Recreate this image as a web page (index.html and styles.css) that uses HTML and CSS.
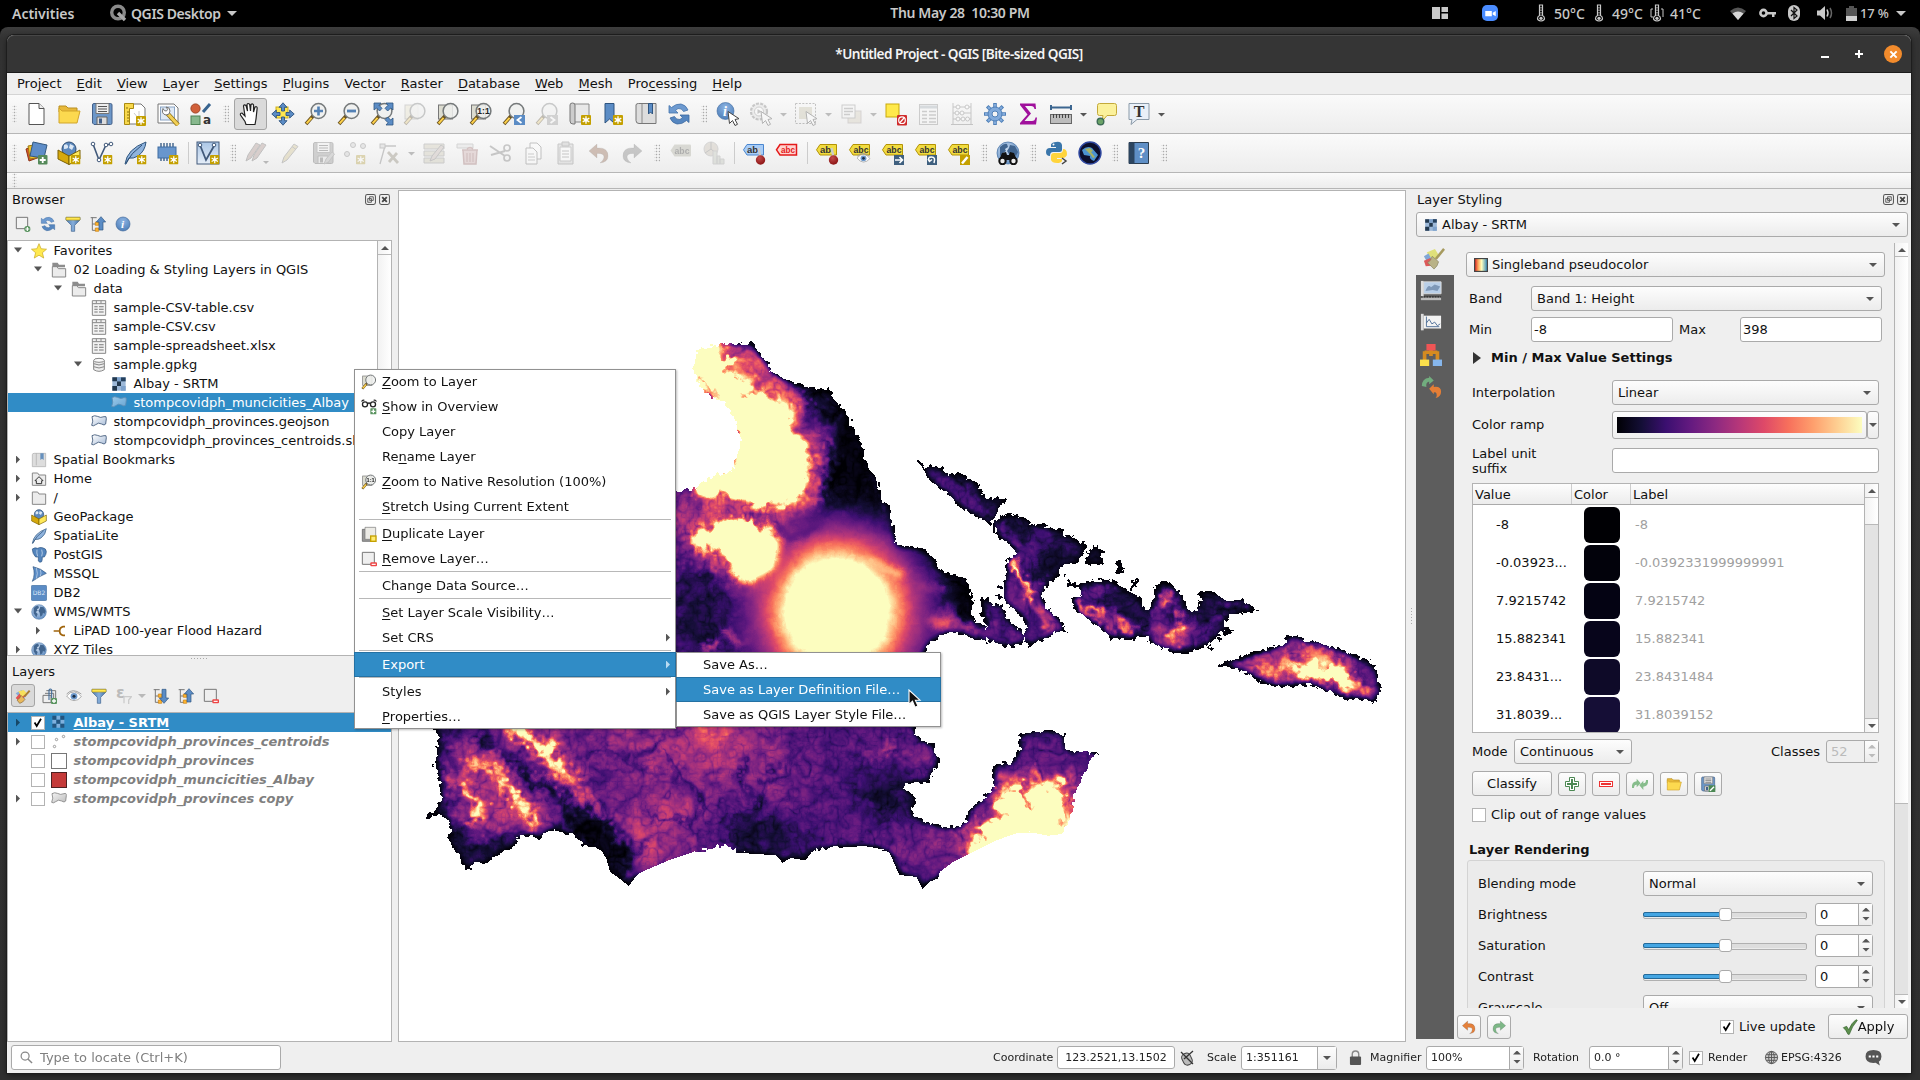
FILE: index.html
```html
<!DOCTYPE html>
<html lang="en">
<head>
<meta charset="utf-8">
<title>*Untitled Project - QGIS [Bite-sized QGIS]</title>
<link rel="stylesheet" href="styles.css">
</head>
<body>
<svg class="defs" width="0" height="0">
<defs>
<linearGradient id="gFilter" x1="0" y1="0" x2="1" y2="0"><stop offset="0" stop-color="#4a78ad"/><stop offset=".5" stop-color="#86aedb"/><stop offset="1" stop-color="#3e6b9f"/></linearGradient>
<linearGradient id="gPoly" x1="0" y1="0" x2="1" y2="1"><stop offset="0" stop-color="#fff"/><stop offset="1" stop-color="#a9bdd8"/></linearGradient>
<linearGradient id="gPolyG" x1="0" y1="0" x2="1" y2="1"><stop offset="0" stop-color="#f4f4f4"/><stop offset="1" stop-color="#bdbdbd"/></linearGradient>
<linearGradient id="gPolyB" x1="0" y1="0" x2="1" y2="1"><stop offset="0" stop-color="#9ccbea"/><stop offset="1" stop-color="#6aa5d3"/></linearGradient>
<linearGradient id="gSpec" x1="0" y1="0" x2="1" y2="0"><stop offset="0" stop-color="#d7191c"/><stop offset=".3" stop-color="#fdae61"/><stop offset=".55" stop-color="#ffffbf"/><stop offset="1" stop-color="#2b83ba"/></linearGradient>
<linearGradient id="gVec" x1="0" y1="0" x2="0" y2="1"><stop offset="0" stop-color="#aac6e6"/><stop offset="1" stop-color="#e6eef8"/></linearGradient>
<radialGradient id="gGlobe" cx=".4" cy=".35" r=".7"><stop offset="0" stop-color="#cfdff2"/><stop offset="1" stop-color="#5d8ac0"/></radialGradient>
<radialGradient id="gInfo" cx=".5" cy=".3" r=".8"><stop offset="0" stop-color="#8db4e3"/><stop offset="1" stop-color="#4678b3"/></radialGradient>
<radialGradient id="gRed" cx=".4" cy=".3" r=".7"><stop offset="0" stop-color="#c34b4b"/><stop offset="1" stop-color="#8c1414"/></radialGradient>
</defs>
<symbol id="star" viewBox="0 0 10 10"><rect width="10" height="10" rx="1" fill="#c4a000"/><path d="M5 1.2v7.6M1.7 3.1l6.6 3.8M8.3 3.1L1.7 6.9" stroke="#fff" stroke-width="1.3"/><circle cx="5" cy="5" r="1.6" fill="#fff"/></symbol>
<symbol id="glass" viewBox="0 0 24 24"><path d="M2 22l7-8" stroke="#6b5320" stroke-width="3.6"/><path d="M2.6 21.4l5-5.6" stroke="#ffd24a" stroke-width="2"/><circle cx="14.500" cy="9" r="7.400" fill="#eef0ef" fill-opacity=".85" stroke="#75797a" stroke-width="1.500"/></symbol>
<symbol id="new" viewBox="0 0 24 24"><path d="M5 1.500h10l5 5v16H5z" fill="#fff" stroke="#555"/><path d="M15 1.500v5h5" fill="#eee" stroke="#555"/></symbol>
<symbol id="open" viewBox="0 0 24 24"><path d="M2 4h7l2 2h9v4H2z" fill="#e8b93a" stroke="#b98f20"/><path d="M2 21V6l3 3h18l-3 12z" fill="#fcd94f" stroke="#d1a52b"/></symbol>
<symbol id="save" viewBox="0 0 24 24"><path d="M2.500 3q0-1.500 1.500-1.500h16.500q1.500 0 1.500 1.500v18q0 1.500-1.500 1.500H4L2.500 21z" fill="#6c97c9" stroke="#44618a"/><path d="M6 1.500h13v10H6z" fill="#eee" stroke="#777"/><path d="M8 4.500h9M8 7h9M8 9.500h9" stroke="#555"/><path d="M7 15h10v7.500H7z" fill="#ddd" stroke="#666"/><path d="M9 16.500h3v5H9z" fill="#44618a"/></symbol>
<symbol id="layout" viewBox="0 0 24 24"><path d="M4 2h14l4 4v16H4z" fill="#fff" stroke="#777"/><path d="M1.500 1.500h9v5h-4v16h-5z" fill="#f8d84c" stroke="#a98a10"/><path d="M4 5v2M4 10h2M4 13h2M4 16h2M4 19h2" stroke="#88700d"/><path d="M11 11l5 6M16 9v6" stroke="#ccc"/><use href="#star" x="13" y="14" width="10" height="10"/></symbol>
<symbol id="layoutmgr" viewBox="0 0 24 24"><path d="M2 2h16l4 4v15H2z" fill="#fff" stroke="#777"/><rect x="4.500" y="5" width="14" height="13" fill="#dfe9f5" stroke="#8aa4c4"/><path d="M11 11l11 12" stroke="#8c6d12" stroke-width="4.500"/><path d="M12 12l10 11" stroke="#f1cf55" stroke-width="3"/><path d="M7 6.500q1 3 3.500 2.500Q13 7.500 10 5q4 0 4 4t-4 4q-5-1-3-6.500z" fill="#fff" stroke="#777"/></symbol>
<symbol id="stylemgr" viewBox="0 0 24 24"><circle cx="6.500" cy="6.500" r="4.600" fill="#d1603a" stroke="#9f4424"/><path d="M14 10l7-8" stroke="#39648f" stroke-width="3"/><rect x="2" y="14" width="9" height="8.500" fill="#87b88d" stroke="#4d8055"/><text x="14" y="22" font-size="12" fill="#333" font-family="DejaVu Sans">a</text></symbol>
<symbol id="hand" viewBox="0 0 24 24"><path d="M8 22.500l-1-3-4.500-6.500q-.5-2 1.500-2l3 3L5.500 4q.5-2 2.500-.5L9.500 9 9 2.500q1-2 2.700 0L12.500 9l.5-6.500q1.500-1.500 2.500.3V10l1.500-5q1.700-1 2.200.8L18 17l-1 5.500z" fill="#fff" stroke="#222" stroke-width="1.200"/></symbol>
<symbol id="panto" viewBox="0 0 24 24"><rect x="5" y="5" width="12" height="11" fill="#ffe74f" stroke="#cdaf1d"/><g fill="#5b8cc5" stroke="#2f5580" stroke-width=".9"><path d="M12 .8l4 4.500h-2.500V9h-3V5.300H8z"/><path d="M12 23.200l4-4.500h-2.500V15h-3v3.700H8z"/><path d="M.8 12l4.500-4v2.500H9v3H5.300V16z"/><path d="M23.200 12l-4.500-4v2.500H15v3h3.700V16z"/></g></symbol>
<symbol id="zoomin" viewBox="0 0 24 24"><use href="#glass"/><path d="M14.500 4.500v9M10 9h9" stroke="#5381b5" stroke-width="2.600"/></symbol>
<symbol id="zoomout" viewBox="0 0 24 24"><use href="#glass"/><path d="M10 9h9" stroke="#5381b5" stroke-width="2.800"/></symbol>
<symbol id="zoomfull" viewBox="0 0 24 24"><use href="#glass"/><g fill="#5b8cc5" stroke="#2f5580" stroke-width=".8"><path d="M4 1h7L9 3.300l3 3L9.600 9l-3-3L4 8z"/><path d="M23 1v7l-2.300-2-3 3-2.700-2.700 3-3L16 1z"/><path d="M23 23v-7l-2.300 2-3-3-2.700 2.700 3 3L16 23z"/></g></symbol>
<symbol id="zoomsel" viewBox="0 0 24 24"><rect x="2" y="3" width="13" height="14" fill="#eae3b8" stroke="#999"/><use href="#glass"/></symbol>
<symbol id="zoomlay" viewBox="0 0 24 24"><rect x="2.500" y="3" width="14" height="14" fill="#dcdcd0" stroke="#777"/><use href="#glass"/></symbol>
<symbol id="zoomone" viewBox="0 0 24 24"><rect x="2.500" y="3" width="14" height="14" fill="#dcdcd0" stroke="#777"/><use href="#glass"/><text x="14.500" y="12" font-size="8.500" font-weight="bold" text-anchor="middle" fill="#222" font-family="Liberation Sans">1:1</text></symbol>
<symbol id="zoomlast" viewBox="0 0 24 24"><use href="#glass"/><rect x="12" y="13" width="11" height="10" fill="#5b8cc5"/><path d="M19.500 15l-4 3 4 3" fill="none" stroke="#fff" stroke-width="1.800"/></symbol>
<symbol id="zoomnext" viewBox="0 0 24 24"><use href="#glass"/><rect x="12" y="13" width="11" height="10" fill="#999"/><path d="M15.500 15l4 3-4 3" fill="none" stroke="#fff" stroke-width="1.800"/></symbol>
<symbol id="mapnew" viewBox="0 0 24 24"><path d="M6 2h15v18H6z" fill="#e8e8e8" stroke="#888"/><path d="M2 3q0-2 2.500-2T7 3v19H5q-3 0-3-3z" fill="#ccc" stroke="#777"/><use href="#star" x="13" y="13" width="10" height="10"/></symbol>
<symbol id="bmnew" viewBox="0 0 24 24"><path d="M4 1.500h9V21l-4.500-4L4 21z" fill="#5b8cc5" stroke="#2f5580"/><use href="#star" x="12" y="13" width="10" height="10"/></symbol>
<symbol id="bmshow" viewBox="0 0 24 24"><path d="M2 3q0-1.500 2.500-1.500H22v20H5q-3 0-3-3z" fill="#ddd" stroke="#777"/><path d="M8 2v19" stroke="#888"/><path d="M14.500 1.500h4V12l-2-2-2 2z" fill="#5b8cc5" stroke="#2f5580"/></symbol>
<symbol id="refresh" viewBox="0 0 24 24"><path d="M2 11V3.500l2.500 2Q9 1.500 14 2q5 1 7 6l-4.500 1.500Q15 6 11 6.500L8.500 8.500 11 11z" fill="#6d9ad0" stroke="#4574ab" stroke-width=".8"/><path d="M22 13v7.500l-2.500-2Q15 22.500 10 22q-5-1-7-6l4.500-1.500Q9 18 13 17.500l2.500-2L13 13z" fill="#5586c0" stroke="#3d6a9f" stroke-width=".8"/></symbol>
<symbol id="cursorw" viewBox="0 0 24 24"><path d="M12 9.500l1.500 12 3-3 2.500 5 2.500-1.200-2.500-4.800 4-.8z" fill="#fff" stroke="#444"/></symbol>
<symbol id="identify" viewBox="0 0 24 24"><circle cx="9.500" cy="9" r="8.500" fill="url(#gInfo)" stroke="#3f6ca1" stroke-width=".6"/><text x="7" y="14" font-size="14" font-style="italic" font-weight="bold" fill="#fff" font-family="Liberation Serif">i</text><use href="#cursorw"/></symbol>
<symbol id="action" viewBox="0 0 24 24"><circle cx="10" cy="9.500" r="8" fill="#ddd" stroke="#777" stroke-width="2.200" stroke-dasharray="3 1.300"/><circle cx="10" cy="9.500" r="4.500" fill="#fff" stroke="#888"/><path d="M8.500 7v5l4-2.500z" fill="#777"/><use href="#cursorw"/></symbol>
<symbol id="select" viewBox="0 0 24 24"><rect x="1.500" y="1.500" width="20" height="20" fill="none" stroke="#666" stroke-dasharray="2 1.400"/><rect x="5" y="5" width="13" height="12" fill="#c8bf98"/><use href="#cursorw"/></symbol>
<symbol id="formsel" viewBox="0 0 24 24"><rect x="9" y="9" width="13" height="12" fill="#d8ceb0" stroke="#a99"/><rect x="3" y="3" width="13" height="13" fill="#f4f4f4" stroke="#888"/><path d="M5 6.500h9M5 9.500h9M5 12.500h6" stroke="#888" stroke-width="1.300"/></symbol>
<symbol id="desel" viewBox="0 0 24 24"><rect x="2" y="2" width="13" height="13" fill="#ffe94b" stroke="#c9a90c"/><rect x="13" y="13" width="10" height="10.500" rx="1" fill="#d02b2b"/><circle cx="18" cy="18.200" r="3.300" fill="none" stroke="#fff" stroke-width="1.200"/><path d="M16 20.500l4-4.500" stroke="#fff" stroke-width="1.200"/></symbol>
<symbol id="table" viewBox="0 0 24 24"><rect x="2.500" y="2.500" width="18" height="20" fill="#f8f8f8" stroke="#888"/><path d="M3 5h17" stroke="#9ab" stroke-width="3"/><path d="M5 9.500h5M5 13h5M5 16.500h5M5 20h5M12 9.500h7M12 13h7M12 16.500h7M12 20h7" stroke="#888" stroke-width="1.300"/></symbol>
<symbol id="abacus" viewBox="0 0 24 24"><path d="M3 1v22M21 1v22M1 22.500h22M3 5h18M3 11h18M3 17h18" stroke="#777" fill="none"/><g fill="#fff" stroke="#777"><circle cx="8" cy="5" r="2"/><circle cx="17" cy="5" r="2"/><circle cx="7" cy="11" r="2"/><circle cx="12" cy="11" r="2"/><circle cx="8" cy="17" r="2"/><circle cx="13" cy="17" r="2"/><circle cx="17.500" cy="17" r="2"/></g></symbol>
<symbol id="gear" viewBox="0 0 24 24"><path d="M12 1v22M1 12h22M4.200 4.200l15.600 15.600M19.800 4.200L4.200 19.800" stroke="#5080b8" stroke-width="3.600"/><path d="M12 2v20M2 12h20M5 5l14 14M19 5L5 19" stroke="#81aadb" stroke-width="2"/><circle cx="12" cy="12" r="7" fill="#81aadb" stroke="#5080b8"/><circle cx="12" cy="12" r="3" fill="#f4f4f4" stroke="#5080b8"/></symbol>
<symbol id="sigma" viewBox="0 0 24 24"><path d="M4 1.500h15.500l.5 5.500h-1.500q-.5-3-3.500-3H9l6 7.500L8.500 19H16q3 0 3.500-3.500H21L20 22.500H4v-1.500l7.500-8.500L4 3z" fill="#a0109c"/></symbol>
<symbol id="ruler" viewBox="0 0 24 24"><path d="M2 3v5M22 3v5M2 5.500h20" stroke="#3c6690" stroke-width="2"/><rect x="1.500" y="12.500" width="21" height="9" fill="#bcbcbc" stroke="#666"/><path d="M4.500 12v4M7.500 12v4M10.500 12v4M13.500 12v4M16.500 12v4M19.500 12v4" stroke="#444"/></symbol>
<symbol id="tip" viewBox="0 0 24 24"><path d="M5.500 1.500h15q2 0 2 2v8q0 2-2 2H13l-5 6 1-6H5.500q-2 0-2-2v-8q0-2 2-2z" fill="#fbf19b" stroke="#c3a93a"/><circle cx="6.500" cy="19.500" r="3.300" fill="#6ba368" stroke="#3d6b55" stroke-width="1.400"/></symbol>
<symbol id="textann" viewBox="0 0 24 24"><path d="M2 1.500h20v16H10l-6 5 1-5H2z" fill="#e9f0f8" stroke="#8b9aa8"/><text x="12" y="15" text-anchor="middle" font-size="16" fill="#333" font-family="Liberation Serif">T</text></symbol>
<symbol id="datasrc" viewBox="0 0 24 24"><path d="M2 8l11-4 3 12-11 4z" fill="#d9542c" stroke="#8c3416"/><path d="M4 5l11-2 2 13-11 2z" fill="#f2c12c" stroke="#9c7a12"/><path d="M9 1l14 3-3 13-14-2z" fill="#5e8dc8" stroke="#34597f"/><rect x="14" y="14" width="9.500" height="9.500" rx="1" fill="#558a5a"/><path d="M18.700 16v6M15.700 19h6" stroke="#fff" stroke-width="1.800"/></symbol>
<symbol id="gpkg" viewBox="0 0 24 24"><circle cx="12" cy="8" r="7" fill="#5d89bd" stroke="#2e4d73"/><path d="M7 4q3-2 4 1T7 8zM13 3l4 2-2 4-3-2z" fill="#dce8f5"/><path d="M1 9l11 6v8.500L1 18z" fill="#d6a90c" stroke="#7a6005"/><path d="M23 9l-11 6v8.500L23 18z" fill="#ffe95a" stroke="#7a6005"/></symbol>
<symbol id="gpkgn" viewBox="0 0 24 24"><use href="#gpkg"/><use href="#star" x="14" y="14" width="9.500" height="9.500"/></symbol>
<symbol id="vnew" viewBox="0 0 24 24"><path d="M3 3l6 16L16 4l5-1" fill="none" stroke="#41597a" stroke-width="1.600"/><g fill="#fff" stroke="#41597a"><circle cx="3" cy="3" r="1.800"/><circle cx="9" cy="19" r="1.800"/><circle cx="16" cy="4" r="1.800"/><circle cx="21" cy="3" r="1.800"/></g><use href="#star" x="13" y="14" width="9.500" height="9.500"/></symbol>
<symbol id="feather" viewBox="0 0 24 24"><path d="M2 23Q4 8 23 1q-1 9-8 14-5 3-9 2l-3 6z" fill="#8fb3dd" stroke="#31577f"/><path d="M3 22Q8 12 19 4" fill="none" stroke="#2c4e75"/></symbol>
<symbol id="feathern" viewBox="0 0 24 24"><use href="#feather"/><use href="#star" x="14" y="14" width="9.500" height="9.500"/></symbol>
<symbol id="chip" viewBox="0 0 24 24"><path d="M5 2v18M8 2v18M11 2v18M14 2v18M17 2v18" stroke="#2f5580" stroke-width="1.300"/><rect x="2" y="6" width="18" height="11" fill="#6896cd" stroke="#3f6ca1"/><use href="#star" x="13" y="14" width="9.500" height="9.500"/></symbol>
<symbol id="virt" viewBox="0 0 24 24"><rect x="1" y="1" width="22" height="22" fill="url(#gVec)" stroke="#41597a"/><path d="M4 4l6 15L18 5" fill="none" stroke="#41597a" stroke-width="1.800"/><circle cx="4" cy="4" r="1.800" fill="#fff" stroke="#41597a"/><circle cx="18" cy="4" r="1.800" fill="#fff" stroke="#41597a"/><use href="#star" x="14" y="14" width="9.500" height="9.500"/></symbol>
<symbol id="pencil" viewBox="0 0 24 24"><path d="M4 22l2-6L16 3l4 2.500L9 19z" fill="#d9c06a" stroke="#777"/><path d="M14 5.500l4 3" stroke="#777"/></symbol>
<symbol id="pencils" viewBox="0 0 24 24"><path d="M1 20l2-6L11 2l4 2-9 13zM7 20l2-6 8-12 4 2-9 13z" fill="#b58a80" stroke="#666"/><path d="M18 20h6l-3 3z" fill="#555"/></symbol>
<symbol id="saveed" viewBox="0 0 24 24"><g filter="grayscale(1)"><use href="#save"/></g><path d="M13 23l2-5 6-7 2.500 2-6 8z" fill="#d9a090" stroke="#777"/></symbol>
<symbol id="points" viewBox="0 0 24 24"><g fill="#ccc" stroke="#777"><circle cx="9" cy="4" r="2.500"/><circle cx="19" cy="5" r="2.500"/><circle cx="3" cy="13" r="2.500"/></g><use href="#star" x="12" y="14" width="9.500" height="9.500"/></symbol>
<symbol id="vertex" viewBox="0 0 24 24"><path d="M3 23L8 5h11" stroke="#777" fill="none" stroke-width="1.300"/><rect x="3" y="3" width="5" height="4" fill="#ccc" stroke="#777"/><path d="M12 21l8-9M11 11l10 11" stroke="#8c8264" stroke-width="2.800"/></symbol>
<symbol id="multied" viewBox="0 0 24 24"><path d="M2 3h20v5H2zM2 10h20v5H2zM2 17h20v5H2z" fill="#cdc6a4" stroke="#888"/><path d="M8 20l2-5 9-11 3 2-9 12z" fill="#c9b0a8" stroke="#777"/></symbol>
<symbol id="trash" viewBox="0 0 24 24"><path d="M2 3h16v4H2z" fill="#ddd" stroke="#999"/><path d="M7 9h16M8 9l1 14h12l1-14M12 8q3-3 6 0" fill="#dfa6a6" stroke="#b36565" stroke-width="1.500"/><path d="M12 12v9M15 12v9M18 12v9" stroke="#a55"/></symbol>
<symbol id="cut" viewBox="0 0 24 24"><path d="M2 5l15 10M3 14l14-4" stroke="#777" stroke-width="2"/><circle cx="19" cy="7" r="3" fill="none" stroke="#777" stroke-width="1.700"/><circle cx="19" cy="17" r="3" fill="none" stroke="#777" stroke-width="1.700"/></symbol>
<symbol id="copy" viewBox="0 0 24 24"><path d="M9 2h7l4 4v12H9z" fill="#fff" stroke="#666"/><path d="M5 7h7l4 4v12H5z" fill="#fff" stroke="#666"/><path d="M7 13h6M7 16h7M7 19h7" stroke="#888"/></symbol>
<symbol id="paste" viewBox="0 0 24 24"><path d="M4 3h15v20H4z" fill="#ccc" stroke="#777"/><path d="M6 6h11v14H6z" fill="#fff" stroke="#888"/><path d="M8 1h7v4H8zM8 10h7M8 13h7M8 16h7" fill="#bbb" stroke="#777"/></symbol>
<symbol id="undo" viewBox="0 0 24 24"><path d="M2 10l8-7v4q11-1 11 8 0 6-8 7 4-3 4-6 0-4-7-3.500V17z" fill="currentColor" stroke="#0003"/></symbol>
<symbol id="redo" viewBox="0 0 24 24"><path d="M22 10l-8-7v4Q3 6 3 15q0 6 8 7-4-3-4-6 0-4 7-3.500V17z" fill="currentColor" stroke="#0003"/></symbol>
<symbol id="tag" viewBox="0 0 24 24"><path d="M5.500 3.500H21q1 0 1 1v10q0 1-1 1H5.500L1.500 9.500z" fill="currentColor"/><text x="13" y="13" font-size="9.500" font-weight="bold" text-anchor="middle" font-family="Liberation Sans" textLength="15" lengthAdjust="spacingAndGlyphs" fill="#333">abc</text></symbol>
<symbol id="tagy" viewBox="0 0 24 24"><path d="M5 3.500h16.500v10.500H5L1.500 8.800z" fill="#f1dc40" stroke="#b39205"/><text x="13" y="12" font-size="9.500" font-weight="bold" text-anchor="middle" font-family="Liberation Sans" textLength="15" lengthAdjust="spacingAndGlyphs" fill="#333">abc</text></symbol>
<symbol id="pin" viewBox="0 0 24 24"><path d="M16.500 7l2 9" stroke="#ccc" stroke-width="2.400"/><circle cx="18.500" cy="19" r="4.700" fill="url(#gRed)"/></symbol>
<symbol id="tagpinb" viewBox="0 0 24 24"><path d="M5 3.500h16.500v10.500H5L1.500 8.800z" fill="#a9cdf7" stroke="#4a86cf"/><text x="10.500" y="12" font-size="9.500" font-weight="bold" text-anchor="middle" font-family="Liberation Sans" fill="#333">ab</text><use href="#pin"/></symbol>
<symbol id="tagred" viewBox="0 0 24 24"><path d="M5 3.500h16.500v10.500H5L1.500 8.800z" fill="#ffd3d0" stroke="#e41a1a" stroke-width="1.500"/><text x="13" y="12" font-size="9.500" font-weight="bold" text-anchor="middle" font-family="Liberation Sans" textLength="14" lengthAdjust="spacingAndGlyphs" fill="#e41a1a">abc</text></symbol>
<symbol id="tagpin" viewBox="0 0 24 24"><path d="M5 3.500h16.500v10.500H5L1.500 8.800z" fill="#f1dc40" stroke="#b39205"/><text x="10.500" y="12" font-size="9.500" font-weight="bold" text-anchor="middle" font-family="Liberation Sans" fill="#333">ab</text><use href="#pin"/></symbol>
<symbol id="eye" viewBox="0 0 24 24"><path d="M1 12Q6 5 13 6q6 1 10 7-5 6-11 6T1 12z" fill="#fff" stroke="#888"/><circle cx="12" cy="12.500" r="5" fill="#6c98cb"/><circle cx="12" cy="12.500" r="2.300" fill="#1c2e45"/><path d="M1 9Q10-1 23 9" fill="none" stroke="#999" stroke-width="1.300"/></symbol>
<symbol id="tageye" viewBox="0 0 24 24"><use href="#tagy"/><use href="#eye" x="8" y="10" width="15" height="14"/></symbol>
<symbol id="tagmove" viewBox="0 0 24 24"><use href="#tagy"/><rect x="13" y="14" width="10" height="10" fill="#3f607f"/><path d="M14 19h7M18.500 16l3 3-3 3" stroke="#fff" stroke-width="1.600" fill="none"/></symbol>
<symbol id="tagrot" viewBox="0 0 24 24"><use href="#tagy"/><rect x="13" y="14" width="10" height="10" fill="#3f607f"/><path d="M20 22q2-6-2.500-6t-2 4M14 18l1.500 2.500L18 18.500" stroke="#fff" stroke-width="1.500" fill="none"/></symbol>
<symbol id="tagedit" viewBox="0 0 24 24"><use href="#tagy"/><rect x="13" y="14" width="10" height="10" fill="#c4a000"/><path d="M15 22.500l5.500-6.500" stroke="#fff" stroke-width="2.500"/></symbol>
<symbol id="diagram" viewBox="0 0 24 24"><circle cx="9" cy="8" r="7" fill="#c7b7a0" stroke="#999"/><path d="M9 8V1M9 8l6 5M9 8L3 12" stroke="#777"/><path d="M11 10h4v13h-4zM15 15h3v8h-3zM18 18h4v5h-4z" fill="#b9c3b0" stroke="#999"/></symbol>
<symbol id="globe" viewBox="0 0 24 24"><circle cx="12" cy="12" r="11" fill="url(#gGlobe)" stroke="#4f79a8" stroke-width=".8"/><path d="M4 6q4-4 7-3l1 3-3 2 1 2-3 2 3 3-2 5-4-6zM14 4l5 1 3 6-2 4-2-2-1 4-3 2-1-6-2-3 2-3z" fill="#41658f"/></symbol>
<symbol id="bino" viewBox="0 0 24 24"><use href="#globe"/><path d="M3 19l3-7 4-1 1 3h2l1-3 4 1 3 7z" fill="#111"/><circle cx="6.500" cy="20" r="3.200" fill="#eee" stroke="#111" stroke-width="2"/><circle cx="17.500" cy="20" r="3.200" fill="#eee" stroke="#111" stroke-width="2"/></symbol>
<symbol id="python" viewBox="0 0 24 24"><path d="M11 1q5-1 6 3v5q0 2-2.500 2H8q-3 0-3 4-4 0-4-4 0-4 4-4h6V6H6V3.500Q7 1 11 1z" fill="#3a76aa"/><path d="M12 22q-5 0-6-3v-4q0-3 3-3h6q3 0 3-4 4 0 4 5 0 3-4 4h-6v1h5v2q-1 2-5 2z" fill="#ffd43b"/><circle cx="8.500" cy="3.600" r="1" fill="#fff"/><path d="M17 17l4 3-4 3" fill="none" stroke="#444" stroke-width="1.500"/></symbol>
<symbol id="earth" viewBox="0 0 24 24"><circle cx="12" cy="12" r="11" fill="#0c0f2d" stroke="#2f48a0" stroke-width="1.400"/><path d="M4 9q5-5 10-2l6 7-4 6q-5-2-4-5l-6-1z" fill="#4c93d0"/><path d="M7 8l5-1 3 3-2 1 4 5-2 1-3-4z" fill="#a9b463"/></symbol>
<symbol id="help" viewBox="0 0 24 24"><path d="M2 1.500h19.500v21H2z" fill="#5f8fc6" stroke="#2c3e50"/><path d="M2 1.500h5.500v21H2z" fill="#2c4560"/><text x="14.500" y="17" font-size="15" font-weight="bold" fill="#fff" text-anchor="middle" font-family="Liberation Serif">?</text></symbol>
<symbol id="addlay" viewBox="0 0 24 24"><path d="M2 2h17v17H2z" fill="#f3f3f3" stroke="#777" stroke-width="1.500"/><rect x="14" y="15" width="9" height="9" rx="4" fill="#5a9460"/><path d="M18.500 16.500v6M15.500 19.500h6" stroke="#fff" stroke-width="1.800"/></symbol>
<symbol id="filter" viewBox="0 0 24 24"><path d="M1.500 2h21v4l-8 8v9h-5v-9l-8-8z" fill="url(#gFilter)" stroke="#3e648f"/><path d="M1.500 2h21v4h-21z" fill="#ffe74f" stroke="#b89c1c"/></symbol>
<symbol id="tree" viewBox="0 0 24 24"><path d="M1 2.500h9M3.500 2v19.500H10M3.500 12H10" stroke="#777" stroke-width="1.500" fill="none"/><path d="M8 9h5v5H8zM8 18h5v5H8z" fill="#ffb52e" stroke="#c98110"/></symbol>
<symbol id="collapse" viewBox="0 0 24 24"><use href="#tree"/><path d="M16.500 1l7 8h-4v12h-6V9h-4z" fill="#5b8cc5" stroke="#2f5580"/></symbol>
<symbol id="expand" viewBox="0 0 24 24"><use href="#tree"/><path d="M16.500 23l7-8h-4V2h-6v13h-4z" fill="#5b8cc5" stroke="#2f5580"/></symbol>
<symbol id="info" viewBox="0 0 24 24"><circle cx="12" cy="12" r="10.500" fill="url(#gInfo)" stroke="#41689a"/><text x="9" y="18" font-size="17" font-style="italic" font-weight="bold" fill="#fff" font-family="Liberation Serif">i</text></symbol>
<symbol id="fav" viewBox="0 0 24 24"><path d="M12 1l3.200 7.600 8.100.7-6.200 5.300 2 8-7.100-4.300-7.100 4.300 2-8L.7 9.300l8.100-.7z" fill="#ffe94f" stroke="#c4a41c"/></symbol>
<symbol id="folder2" viewBox="0 0 24 24"><path d="M2 1h8l2 3h9v4H2z" fill="#8d8d8d"/><path d="M2 22.500V7h7l2 3h11v12.500z" fill="#ececec" stroke="#888" stroke-width="1.500"/></symbol>
<symbol id="folder" viewBox="0 0 24 24"><path d="M2 21.500V3h8l2 3h10v15.500z" fill="#ececec" stroke="#888" stroke-width="1.500"/></symbol>
<symbol id="home" viewBox="0 0 24 24"><use href="#folder"/><path d="M6 14.500l6-6 6 6h-2V19H8v-4.500z" fill="none" stroke="#333" stroke-width="1.500"/></symbol>
<symbol id="csv" viewBox="0 0 24 24"><path d="M2 1h20v22H2z" fill="#f2f2f2" stroke="#888" stroke-width="1.500"/><path d="M2 5.500h20M8 1v4M15 1v4" stroke="#888" stroke-width="1.500"/><path d="M5 10h5M12 10h7M5 14h5M12 14h7M5 18h5M12 18h7" stroke="#777" stroke-width="1.600"/></symbol>
<symbol id="db" viewBox="0 0 24 24"><path d="M4 5v14q8 5 16 0V5" fill="#eee" stroke="#888" stroke-width="1.500"/><ellipse cx="12" cy="5" rx="8" ry="3" fill="#fafafa" stroke="#888" stroke-width="1.500"/><path d="M4 10q8 4 16 0M4 14.500q8 4 16 0" fill="none" stroke="#888" stroke-width="1.500"/></symbol>
<symbol id="raster" viewBox="0 0 24 24"><rect x="2" y="2" width="20" height="20" fill="#9db9d9"/><path d="M2 2h7v6H2zM9 8h6v7H9zM2 15h7v7H2z" fill="#23394f"/><path d="M15 2h7v6h-7z" fill="#24405e"/><path d="M9 2h6v6H9zM15 15h7v7h-7z" fill="#7ea2cc"/></symbol>
<symbol id="rastersel" viewBox="0 0 24 24"><path d="M8 1h6v6H8zM2 7h6v6H2zM14 7h6v6h-6zM8 13h6v6H8z" fill="#7fb0dd"/><path d="M2 1h6v6H2zM14 1h6v6h-6zM8 7h6v6H8zM2 13h6v6H2zM14 13h6v6h-6z" fill="#24557f"/></symbol>
<symbol id="poly" viewBox="0 0 24 24"><path d="M1.500 4q4-2.500 8-.5 5 3 10 .5 4-1.500 3.500 3l-1 8q-2 3-6 0-5-3-9 1-4 3-6 1 3-6 .5-13z" fill="url(#gPoly)" stroke="#41597a" stroke-width="1.300"/></symbol>
<symbol id="polyb" viewBox="0 0 24 24"><path d="M1.500 4q4-2.500 8-.5 5 3 10 .5 4-1.500 3.500 3l-1 8q-2 3-6 0-5-3-9 1-4 3-6 1 3-6 .5-13z" fill="url(#gPolyB)" stroke="#5f8fb5" stroke-width="1.300"/></symbol>
<symbol id="polyg" viewBox="0 0 24 24"><path d="M1.500 4q4-2.500 8-.5 5 3 10 .5 4-1.500 3.500 3l-1 8q-2 3-6 0-5-3-9 1-4 3-6 1 3-6 .5-13z" fill="url(#gPolyG)" stroke="#888" stroke-width="1.300"/></symbol>
<symbol id="bm" viewBox="0 0 24 24"><path d="M2 4q0-2 3-2h17v20H2z" fill="#ddd" stroke="#aaa"/><path d="M8 2v18" stroke="#aaa"/><path d="M14 2h5v10l-2.500-2L14 12z" fill="#6690bd"/></symbol>
<symbol id="eleph" viewBox="0 0 24 24"><path d="M2 3q4-3 8-1 3-2 7-1 6 1 6 6 0 4-3 8h-3q0 5-1 7-3 2-5-1v-6H7q-5-5-5-12z" fill="#5485bd" stroke="#2d5582"/><path d="M9 4q-1 5 1 10M16 4q2 5 0 10" fill="none" stroke="#dce8f5"/></symbol>
<symbol id="mssql" viewBox="0 0 24 24"><path d="M3 1q13 3 20 10Q13 15 2 23 7 12 3 1z" fill="#5b8cc5" stroke="#2f5580"/><path d="M8 3q3 8 0 16M14 6q2 5 0 9" fill="none" stroke="#cfe0f2"/></symbol>
<symbol id="db2" viewBox="0 0 24 24"><rect x=".5" y=".5" width="23" height="23" rx="2" fill="#5b8cc5" stroke="#47719f"/><text x="12" y="15.500" font-size="9" text-anchor="middle" fill="#dce8f5" font-family="DejaVu Sans">DB2</text></symbol>
<symbol id="conn" viewBox="0 0 24 24"><path d="M4 12h8M21 5.500h-3q-5 1-5 6.500t5 6.500h3" fill="none" stroke="#a0640c" stroke-width="2.600"/></symbol>
<symbol id="brush" viewBox="0 0 24 24"><path d="M1 8l9-5 8 6-7 10z" fill="#86add9"/><path d="M1 15l9-10 6 6-8 10z" fill="#e45050"/><path d="M5 5l8-2 5 5-8 6z" fill="#f6e05c"/><path d="M9 11l6 6q-3 5-8 6l-4-5q5-2 6-7z" fill="#e9b95c" stroke="#8b6a3a"/><path d="M14 13l8-9" stroke="#a87d33" stroke-width="3"/></symbol>
<symbol id="brushbig" viewBox="0 0 24 24"><path d="M4 5l9-4 5 8-7 5z" fill="#dfe07a"/><path d="M1 9l5-3 5 9-6 1z" fill="#7fa6d6"/><path d="M1 14l7-3 4 8-9 1z" fill="#dc5a5a"/><path d="M10 9l7 6q-1 5-5 8L5 16q4-2 5-7z" fill="#b9b287" stroke="#858060" stroke-width=".7"/><path d="M14 12l9-11" stroke="#a69a5e" stroke-width="2.800"/></symbol>
<symbol id="addgrp" viewBox="0 0 24 24"><path d="M6 8h13v12M3 11h12v11H3z" fill="none" stroke="#777" stroke-width="1.500"/><path d="M8 4h14v12" fill="none" stroke="#777" stroke-width="1.500"/><path d="M12 18V3q2-3 4 0v12" fill="none" stroke="#3e6a99" stroke-width="1.600"/><rect x="15" y="15" width="9" height="9" rx="1.500" fill="#5a9460"/><path d="M19.500 16.500v6M16.500 19.500h6" stroke="#fff" stroke-width="2"/></symbol>
<symbol id="eps" viewBox="0 0 24 24"><text x="0" y="15" font-size="24" fill="#bbb" font-family="DejaVu Sans">ε</text><path d="M12 13h11l-4 5v6M12 13v10" stroke="#ccc" fill="none" stroke-width="2"/></symbol>
<symbol id="remlay" viewBox="0 0 24 24"><path d="M2 2h18v18H2z" fill="#efefef" stroke="#777" stroke-width="1.500"/><rect x="14" y="17" width="10" height="6" rx="1.500" fill="#ee4444"/><path d="M16 20h6" stroke="#fff" stroke-width="1.800"/></symbol>
<symbol id="duplay" viewBox="0 0 24 24"><path d="M2 5h15v18H2z" fill="#999" stroke="#555"/><path d="M6 2h16v18H6z" fill="#ecebe6" stroke="#777"/><rect x="14.500" y="15" width="8" height="8" fill="#ffeb70" stroke="#c4a000" stroke-width="2"/></symbol>
<symbol id="glasses" viewBox="0 0 24 24"><circle cx="6" cy="8" r="3.800" fill="none" stroke="#222" stroke-width="2"/><circle cx="18" cy="8" r="3.800" fill="none" stroke="#222" stroke-width="2"/><path d="M1 4q1-3 4-2M10 7q2-2 4 0M19 2q3-1 4 2" fill="none" stroke="#222" stroke-width="1.800"/><rect x="14" y="14" width="9" height="9" rx="1" fill="#5a9460"/><path d="M18.500 15.500v6M15.500 18.500h6" stroke="#fff" stroke-width="2"/></symbol>
<symbol id="globemap" viewBox="0 0 24 24"><path d="M1 1h3v17H1z" fill="#ddd"/><path d="M4 2h19v13H4z" fill="#b9cfe8" stroke="#ddd"/><path d="M6 12Q9 4 12 8l4-3 6 2-3 5-5-1z" fill="#7e98b8"/><path d="M1 19h22v3H1z" fill="#bbb"/><path d="M1 18.500h22" stroke="#111" stroke-dasharray="2 1"/></symbol>
<symbol id="histo" viewBox="0 0 24 24"><path d="M1 2h3v18H1z" fill="#ddd"/><path d="M4 4h19v14H4z" fill="#f3f3f3"/><path d="M7 5v11h14M7 12l3-4 3 5 3-2 3 4 3-2" fill="none" stroke="#4a6b95"/></symbol>
<symbol id="pyr" viewBox="0 0 24 24"><path d="M12 4v9M5 8v11M19 8v11M5 9h14" stroke="#d58b20" stroke-width="4" fill="none"/><rect x="7" y="0" width="10" height="7" fill="#ef5555"/><rect x="0" y="17" width="10" height="7" fill="#fbe04c"/><rect x="14" y="17" width="10" height="7" fill="#86b6ec"/></symbol>
<symbol id="hist" viewBox="0 0 24 24"><path d="M2 11q0-8 8-9V0l5 5-5 4V6q-4 1-3 6z" fill="#72ad7e"/><path d="M10 14l5-5v3q8-1 8 5t-6 7q2-3 1-5t-3-1v2z" fill="#e57e36"/></symbol>
<symbol id="sync" viewBox="0 0 24 24"><g fill="#87bd8c"><path d="M0 18q-1-9 7-10V4l6 7-6 6v-4q-4 0-4 5z"/><path d="M24 6q1 9-7 10v5l-6-7 6-7v4q4 0 4-5z"/></g></symbol>
<symbol id="check" viewBox="0 0 24 24"><path d="M2 13l5-2 3 5Q15 5 21 1l2 1Q15 11 11 23H9Q6 16 2 13z" fill="#5d8f4e" stroke="#33602b"/></symbol>
<symbol id="tick" viewBox="0 0 14 14"><path d="M3 6.500l2.500 4L10.500 2" fill="none" stroke="#000" stroke-width="2"/></symbol>
<symbol id="float" viewBox="0 0 12 12"><rect x=".6" y=".6" width="10.800" height="10.800" rx="2" fill="none" stroke="#555" stroke-width="1.100"/><path d="M5 3h4v4H5zM3 5h4v4H3z" fill="#efefef" stroke="#555"/></symbol>
<symbol id="close" viewBox="0 0 12 12"><rect x=".6" y=".6" width="10.800" height="10.800" rx="2" fill="none" stroke="#555" stroke-width="1.100"/><path d="M3.500 3.500l5 5M8.500 3.500l-5 5" stroke="#444" stroke-width="2"/></symbol>
<symbol id="thermo" viewBox="0 0 10 18"><path d="M3.500 1h3v10.500q2 1 2 3t-3.500 2.500q-3.500-.5-3.500-2.500t2-3z" fill="none" stroke="#c8c8c8" stroke-width="1.200"/><path d="M5 3v10" stroke="#c8c8c8" stroke-dasharray="1.500 1"/><circle cx="5" cy="14.300" r="1.600" fill="#c8c8c8"/></symbol>
</svg>

<header class="topbar">
  <span class="activities">Activities</span>
  <svg class="qlogo" viewBox="0 0 18 18"><circle cx="9" cy="8.500" r="6.300" fill="none" stroke="#8a8a8a" stroke-width="3.400"/><path d="M9 9l7 7" stroke="#aaa" stroke-width="3.400"/></svg>
  <span class="appname">QGIS Desktop</span><i class="tri down light"></i>
  <span class="clock">Thu May 28&nbsp; 10:30 PM</span>
  <div class="tray">
    <svg viewBox="0 0 16 12" width="16" height="12"><path d="M0 0h8v12H0zM9.500 0H16v5H9.500zM9.500 6.500H16V12H9.500z" fill="#c8c8c8"/></svg>
    <span class="zoomapp"><svg viewBox="0 0 12 8" width="11" height="7"><path d="M0 1h7.500v6H0zM8.500 3L12 1v6L8.500 5z" fill="#fff"/></svg></span>
    <svg width="10" height="18"><use href="#thermo"/></svg><span>50°C</span>
    <svg width="10" height="18"><use href="#thermo"/></svg><span>49°C</span>
    <svg viewBox="0 0 14 18" width="14" height="18"><use href="#thermo" x="2" width="10" height="18"/><path d="M3 5H1v8h2M11 5h2v8" fill="none" stroke="#c8c8c8"/></svg><span>41°C</span>
    <svg viewBox="0 0 16 13" width="16" height="13"><path d="M0 4q8-7 16 0l-8 9z" fill="#555"/><path d="M2.500 6.500q5.500-4 11 0L8 13z" fill="#d8d8d8"/></svg>
    <svg viewBox="0 0 17 10" width="17" height="10"><circle cx="4.500" cy="5" r="3.100" fill="none" stroke="#c8c8c8" stroke-width="2.600"/><path d="M8 4h9v2.500h-1.500V9H13V6.500H8z" fill="#c8c8c8"/></svg>
    <svg viewBox="0 0 12 16" width="12" height="16"><rect width="12" height="16" rx="6" fill="#c8c8c8"/><path d="M3 5l6 6-3 2.500v-11L9 5l-6 6" fill="none" stroke="#111" stroke-width="1.200"/></svg>
    <svg viewBox="0 0 16 14" width="16" height="14"><path d="M0 4.500h3L8 0v14L3 9.500H0z" fill="#c8c8c8"/><path d="M10 3.500q2 3.500 0 7" fill="none" stroke="#c8c8c8" stroke-width="1.500"/><path d="M13 2q3 5 0 10" fill="none" stroke="#666" stroke-width="1.500"/></svg>
    <svg viewBox="0 0 11 15" width="11" height="15"><path d="M3 0h5v2h3v8H0V2h3z" fill="#555"/><path d="M0 10h11v5H0z" fill="#d0d0d0"/></svg>
    <span class="pct">17 %</span><i class="tri down light"></i>
  </div>
</header>

<div class="desktop">
<div class="window">
  <div class="titlebar"><span>*Untitled Project - QGIS [Bite-sized QGIS]</span>
    <div class="winbtns"><i class="wmin"></i><i class="wmax"></i><i class="wclose"><svg viewBox="0 0 10 10" width="9" height="9"><path d="M1.500 1.500l7 7M8.500 1.500l-7 7" stroke="#fff" stroke-width="2.200"/></svg></i></div>
  </div>
  <nav class="menubar"><span>Pro<u>j</u>ect</span><span><u>E</u>dit</span><span><u>V</u>iew</span><span><u>L</u>ayer</span><span><u>S</u>ettings</span><span><u>P</u>lugins</span><span>Vect<u>o</u>r</span><span><u>R</u>aster</span><span><u>D</u>atabase</span><span><u>W</u>eb</span><span><u>M</u>esh</span><span>Pro<u>c</u>essing</span><span><u>H</u>elp</span></nav>

  <div class="toolbar">
    <i class="grip first"></i>
    <b><svg><use href="#new"/></svg></b><b><svg><use href="#open"/></svg></b><b><svg><use href="#save"/></svg></b><b><svg><use href="#layout"/></svg></b><b><svg><use href="#layoutmgr"/></svg></b><b><svg><use href="#stylemgr"/></svg></b>
    <i class="grip"></i>
    <b class="on"><svg><use href="#hand"/></svg></b><b><svg><use href="#panto"/></svg></b><b><svg><use href="#zoomin"/></svg></b><b><svg><use href="#zoomout"/></svg></b><b><svg><use href="#zoomfull"/></svg></b><b class="off"><svg><use href="#zoomsel"/></svg></b><b><svg><use href="#zoomlay"/></svg></b><b><svg><use href="#zoomone"/></svg></b><b><svg><use href="#zoomlast"/></svg></b><b class="off"><svg><use href="#zoomnext"/></svg></b><b><svg><use href="#mapnew"/></svg></b><b><svg><use href="#bmnew"/></svg></b><b><svg><use href="#bmshow"/></svg></b><b><svg><use href="#refresh"/></svg></b>
    <i class="grip"></i>
    <b><svg><use href="#identify"/></svg></b><b class="off"><svg><use href="#action"/></svg></b><em class="off"></em><b class="off"><svg><use href="#select"/></svg></b><em class="off"></em><b class="off"><svg><use href="#formsel"/></svg></b><em class="off"></em><b><svg><use href="#desel"/></svg></b><b class="off"><svg><use href="#table"/></svg></b><b class="off"><svg><use href="#abacus"/></svg></b><b><svg><use href="#gear"/></svg></b><b><svg><use href="#sigma"/></svg></b><b><svg><use href="#ruler"/></svg></b><em></em><b><svg><use href="#tip"/></svg></b><b><svg><use href="#textann"/></svg></b><em></em>
  </div>
  <div class="toolbar">
    <i class="grip first"></i>
    <b><svg><use href="#datasrc"/></svg></b><b><svg><use href="#gpkgn"/></svg></b><b><svg><use href="#vnew"/></svg></b><b><svg><use href="#feathern"/></svg></b><b><svg><use href="#chip"/></svg></b><i class="vline"></i><b><svg><use href="#virt"/></svg></b>
    <i class="grip"></i>
    <b class="off"><svg><use href="#pencils"/></svg></b><b class="off"><svg><use href="#pencil"/></svg></b><b class="off mono"><svg><use href="#saveed"/></svg></b><b class="off"><svg><use href="#points"/></svg></b><b class="off"><svg><use href="#vertex"/></svg></b><em class="off"></em><b class="off"><svg><use href="#multied"/></svg></b><b class="off"><svg><use href="#trash"/></svg></b><b class="off"><svg><use href="#cut"/></svg></b><b class="off"><svg><use href="#copy"/></svg></b><b class="off"><svg><use href="#paste"/></svg></b><b class="off brown"><svg><use href="#undo"/></svg></b><b class="off grey"><svg><use href="#redo"/></svg></b>
    <i class="grip"></i>
    <b class="off khaki"><svg><use href="#tag"/></svg></b><b class="off"><svg><use href="#diagram"/></svg></b><i class="vline"></i><b><svg><use href="#tagpinb"/></svg></b><b><svg><use href="#tagred"/></svg></b><i class="vline"></i><b><svg><use href="#tagpin"/></svg></b><b><svg><use href="#tageye"/></svg></b><b><svg><use href="#tagmove"/></svg></b><b><svg><use href="#tagrot"/></svg></b><b><svg><use href="#tagedit"/></svg></b>
    <i class="grip"></i><b><svg><use href="#bino"/></svg></b><i class="grip"></i><b><svg><use href="#python"/></svg></b><b><svg><use href="#earth"/></svg></b><i class="grip"></i><b><svg><use href="#help"/></svg></b><i class="grip"></i>
  </div>
  <div class="toolbar slim"><i class="grip first"></i></div>

  <main class="work">
    <section class="leftdock">
      <div class="docktitle">Browser<span class="dockbtns"><svg><use href="#float"/></svg><svg><use href="#close"/></svg></span></div>
      <div class="docktools btools"><b><svg><use href="#addlay"/></svg></b><b><svg><use href="#refresh"/></svg></b><b><svg><use href="#filter"/></svg></b><b><svg><use href="#collapse"/></svg></b><b><svg><use href="#info"/></svg></b></div>
      <div class="treebox">
        <ul class="tree">
          <li class="l0"><i class="ar d"></i><svg><use href="#fav"/></svg>Favorites</li>
          <li class="l1"><i class="ar d"></i><svg><use href="#folder2"/></svg>02 Loading &amp; Styling Layers in QGIS</li>
          <li class="l2"><i class="ar d"></i><svg><use href="#folder2"/></svg>data</li>
          <li class="l3"><i class="ar"></i><svg><use href="#csv"/></svg>sample-CSV-table.csv</li>
          <li class="l3"><i class="ar"></i><svg><use href="#csv"/></svg>sample-CSV.csv</li>
          <li class="l3"><i class="ar"></i><svg><use href="#csv"/></svg>sample-spreadsheet.xlsx</li>
          <li class="l3"><i class="ar d"></i><svg><use href="#db"/></svg>sample.gpkg</li>
          <li class="l4"><i class="ar"></i><svg><use href="#raster"/></svg>Albay - SRTM</li>
          <li class="l4 sel"><i class="ar"></i><svg><use href="#polyb"/></svg>stompcovidph_muncicities_Albay</li>
          <li class="l3"><i class="ar"></i><svg><use href="#poly"/></svg>stompcovidph_provinces.geojson</li>
          <li class="l3"><i class="ar"></i><svg><use href="#poly"/></svg>stompcovidph_provinces_centroids.shp</li>
          <li class="l0"><i class="ar r"></i><svg><use href="#bm"/></svg>Spatial Bookmarks</li>
          <li class="l0"><i class="ar r"></i><svg><use href="#home"/></svg>Home</li>
          <li class="l0"><i class="ar r"></i><svg><use href="#folder"/></svg>/</li>
          <li class="l0"><i class="ar"></i><svg><use href="#gpkg"/></svg>GeoPackage</li>
          <li class="l0"><i class="ar"></i><svg><use href="#feather"/></svg>SpatiaLite</li>
          <li class="l0"><i class="ar"></i><svg><use href="#eleph"/></svg>PostGIS</li>
          <li class="l0"><i class="ar"></i><svg><use href="#mssql"/></svg>MSSQL</li>
          <li class="l0"><i class="ar"></i><svg><use href="#db2"/></svg>DB2</li>
          <li class="l0"><i class="ar d"></i><svg><use href="#globe"/></svg>WMS/WMTS</li>
          <li class="l1"><i class="ar r"></i><svg><use href="#conn"/></svg>LiPAD 100-year Flood Hazard</li>
          <li class="l0"><i class="ar r"></i><svg><use href="#globe"/></svg>XYZ Tiles</li>
        </ul>
        <div class="sbar"><i class="sbtn"><i class="tri up"></i></i><i class="shandle"></i></div>
      </div>
      <div class="splitter"><i></i></div>
      <div class="docktitle lay">Layers</div>
      <div class="docktools ltools"><b class="on"><svg><use href="#brush"/></svg></b><b><svg><use href="#addgrp"/></svg></b><b><svg><use href="#eye"/></svg></b><b><svg><use href="#filter"/></svg></b><b><svg><use href="#eps"/></svg></b><em class="off"></em><b><svg><use href="#expand"/></svg></b><b><svg><use href="#collapse"/></svg></b><b><svg><use href="#remlay"/></svg></b></div>
      <ul class="layers">
        <li class="sel"><i class="ar r"></i><span class="cb"><svg><use href="#tick"/></svg></span><svg class="ic"><use href="#rastersel"/></svg><span class="nm act">Albay - SRTM</span></li>
        <li><i class="ar r"></i><span class="cb"></span><svg class="ic" viewBox="0 0 16 16"><g fill="none" stroke="#999"><circle cx="5.500" cy="5.500" r="1.200"/><circle cx="12.500" cy="2.500" r="1.200"/><circle cx="3.500" cy="12.500" r="1.200"/></g></svg><span class="nm">stompcovidph_provinces_centroids</span></li>
        <li><i class="ar"></i><span class="cb"></span><span class="ic sw white"></span><span class="nm">stompcovidph_provinces</span></li>
        <li><i class="ar"></i><span class="cb"></span><span class="ic sw red"></span><span class="nm">stompcovidph_muncicities_Albay</span></li>
        <li><i class="ar r"></i><span class="cb"></span><svg class="ic"><use href="#polyg"/></svg><span class="nm">stompcovidph_provinces copy</span></li>
      </ul>
    </section>

    <section class="mapframe"><canvas id="map" width="1006" height="850"></canvas></section>
    <div class="vsplit"><i></i></div>

    <section class="rightdock">
      <div class="docktitle rt">Layer Styling<span class="dockbtns"><svg><use href="#float"/></svg><svg><use href="#close"/></svg></span></div>
      <div class="combo layercombo"><svg><use href="#raster"/></svg>Albay - SRTM<i class="tri down"></i></div>
      <div class="stylebody">
        <div class="tabs"><span class="tab cur"><svg><use href="#brushbig"/></svg></span><span class="tab"><svg><use href="#globemap"/></svg></span><span class="tab"><svg><use href="#histo"/></svg></span><span class="tab"><svg><use href="#pyr"/></svg></span><span class="tab"><svg><use href="#hist"/></svg></span></div>
        <div class="stylemain">
          <div class="scroll">
            <div class="form">
              <div class="combo renderer"><svg viewBox="0 0 12 12"><rect x=".5" y=".5" width="11" height="11" fill="url(#gSpec)" stroke="#444"/></svg>Singleband pseudocolor<i class="tri down"></i></div>
              <div class="row band"><label>Band</label><div class="combo">Band 1: Height<i class="tri down"></i></div></div>
              <div class="row minmax"><label>Min</label><div class="input">-8</div><label class="mx">Max</label><div class="input">398</div></div>
              <div class="sect"><i class="bigtri"></i><strong>Min / Max Value Settings</strong></div>
              <div class="row wide"><label>Interpolation</label><div class="combo">Linear<i class="tri down"></i></div></div>
              <div class="row wide ramp"><label>Color ramp</label><div class="rampbox"><i></i></div><div class="rampbtn"><i class="tri down"></i></div></div>
              <div class="row wide suffix"><label>Label unit<br>suffix</label><div class="input"></div></div>
              <div class="table">
                <div class="tbody">
                  <div class="thead"><span>Value</span><span>Color</span><span>Label</span></div>
                  <div class="tr"><span>-8</span><i class="c1"></i><span>-8</span></div>
                  <div class="tr"><span>-0.03923...</span><i class="c2"></i><span>-0.0392331999999991</span></div>
                  <div class="tr"><span>7.9215742</span><i class="c3"></i><span>7.9215742</span></div>
                  <div class="tr"><span>15.882341</span><i class="c4"></i><span>15.882341</span></div>
                  <div class="tr"><span>23.8431...</span><i class="c5"></i><span>23.8431484</span></div>
                  <div class="tr"><span>31.8039...</span><i class="c6"></i><span>31.8039152</span></div>
                </div>
                <div class="sbar"><i class="sbtn"><i class="tri up"></i></i><i class="shandle"></i><i class="sgroove"></i><i class="sbtn"><i class="tri down"></i></i></div>
              </div>
              <div class="row mode"><label>Mode</label><div class="combo">Continuous<i class="tri down"></i></div><label class="cls">Classes</label><div class="spin dis"><span>52</span><i class="arrows"></i></div></div>
              <div class="row btns"><div class="btn classify">Classify</div>
                <div class="btn"><svg viewBox="0 0 16 16"><path d="M5.500 1.500h5v4h4v5h-4v4h-5v-4h-4v-5h4z" fill="#fff" stroke="#4c8853"/><path d="M8 3v10M3 8h10" stroke="#4c8853" stroke-width="2"/></svg></div>
                <div class="btn"><svg viewBox="0 0 16 16"><rect x="1.500" y="5.500" width="13" height="5" fill="#fff" stroke="#e33"/><path d="M3 8h10" stroke="#e33" stroke-width="2"/></svg></div>
                <div class="btn"><svg><use href="#sync"/></svg></div><div class="btn"><svg><use href="#open"/></svg></div>
                <div class="btn"><svg viewBox="0 0 24 24"><use href="#save" width="24" height="24"/><rect x="13" y="14" width="10" height="10" fill="#4c8853"/><path d="M15 22l6-6" stroke="#fff" stroke-width="2"/></svg></div></div>
              <div class="row clip"><span class="cb"></span>Clip out of range values</div>
              <div class="grouptitle"><strong>Layer Rendering</strong></div>
              <div class="group">
                <div class="grow"><label>Blending mode</label><div class="combo">Normal<i class="tri down"></i></div></div>
                <div class="grow"><label>Brightness</label><div class="slider"><i></i><b></b></div><div class="spin"><span>0</span><i class="arrows"></i></div></div>
                <div class="grow"><label>Saturation</label><div class="slider"><i></i><b></b></div><div class="spin"><span>0</span><i class="arrows"></i></div></div>
                <div class="grow"><label>Contrast</label><div class="slider"><i></i><b></b></div><div class="spin"><span>0</span><i class="arrows"></i></div></div>
                <div class="grow"><label>Grayscale</label><div class="combo">Off<i class="tri down"></i></div></div>
              </div>
            </div>
            <div class="sbar big"><i class="sbtn"><i class="tri up"></i></i><i class="shandle"></i><i class="sgroove"></i><i class="sbtn"><i class="tri down"></i></i></div>
          </div>
          <div class="applyrow"><div class="btn sm orange"><svg><use href="#undo"/></svg></div><div class="btn sm green"><svg><use href="#redo"/></svg></div><span class="cb"><svg><use href="#tick"/></svg></span><span class="live">Live update</span><div class="btn apply"><svg><use href="#check"/></svg>Apply</div></div>
        </div>
      </div>
    </section>
  </main>

  <footer class="status">
    <div class="locator"><svg viewBox="0 0 14 14"><circle cx="5.500" cy="5.500" r="4.300" fill="none" stroke="#888" stroke-width="1.300"/><path d="M8.500 8.500l4.500 4.500" stroke="#888" stroke-width="1.500"/></svg>Type to locate (Ctrl+K)</div>
    <label>Coordinate</label><div class="input coord">123.2521,13.1502</div>
    <svg class="mouse" viewBox="0 0 16 16"><rect x="3" y="3" width="9" height="12" rx="4" fill="#bbb" stroke="#444" transform="rotate(-25 8 8)"/><path d="M2 2l12 12M14 1L5 9" stroke="#333" stroke-width="1.300"/></svg>
    <label>Scale</label><div class="spin scale"><span>1:351161</span><i class="drop"><i class="tri down"></i></i></div>
    <svg class="lock" viewBox="0 0 14 16"><path d="M3.500 8V4.500q0-3.500 3.500-3.500t3.500 3.500V8" fill="none" stroke="#888" stroke-width="1.500"/><rect x="1" y="7" width="12" height="9" rx="1" fill="#555"/></svg>
    <label>Magnifier</label><div class="spin magn"><span>100%</span><i class="arrows"></i></div>
    <label class="rotl">Rotation</label><div class="spin rot"><span>0.0 °</span><i class="arrows"></i></div>
    <span class="cb"><svg><use href="#tick"/></svg></span><label class="render">Render</label>
    <svg class="crs" viewBox="0 0 16 16"><circle cx="8" cy="8" r="6.500" fill="#ccc" stroke="#555"/><ellipse cx="8" cy="8" rx="3" ry="6.500" fill="none" stroke="#555"/><path d="M1.500 8h13M2.500 5h11M2.500 11h11M8 1.500v13" stroke="#555"/></svg>
    <label class="epsg">EPSG:4326</label>
    <svg class="bubble" viewBox="0 0 16 16"><path d="M8 1q7.500 0 7.500 6 0 3.500-2.500 5l1 3.500-4-2.500Q.5 14 .5 7 .5 1 8 1z" fill="#555"/><path d="M3.500 7h2M7 7h2M10.500 7h2" stroke="#fff" stroke-width="2"/></svg>
  </footer>
</div>
</div>

<ul class="ctx main">
  <li><svg><use href="#zoomlay"/></svg><u>Z</u>oom to Layer</li>
  <li><svg><use href="#glasses"/></svg><u>S</u>how in Overview</li>
  <li>Copy Layer</li>
  <li>Re<u>n</u>ame Layer</li>
  <li><svg><use href="#zoomone"/></svg><u>Z</u>oom to Native Resolution (100%)</li>
  <li><u>S</u>tretch Using Current Extent</li>
  <li class="sep"></li>
  <li><svg><use href="#duplay"/></svg><u>D</u>uplicate Layer</li>
  <li><svg><use href="#remlay"/></svg><u>R</u>emove Layer…</li>
  <li class="sep"></li>
  <li>Change Data Source…</li>
  <li class="sep"></li>
  <li><u>S</u>et Layer Scale Visibility…</li>
  <li>Set CRS<i class="sub"></i></li>
  <li class="sep"></li>
  <li class="hl">Export<i class="sub"></i></li>
  <li class="sep"></li>
  <li>Styles<i class="sub"></i></li>
  <li><u>P</u>roperties…</li>
</ul>
<ul class="ctx submenu">
  <li>Save As…</li>
  <li class="hl">Save as Layer Definition File…</li>
  <li>Save as QGIS Layer Style File…</li>
</ul>
<svg class="pointer" viewBox="0 0 14 20"><path d="M1 1v14.500l3.500-3.300 2.500 6 3-1.300-2.600-5.700H12z" fill="#111" stroke="#fff" stroke-width="1.100"/></svg>
<script src="map.js"></script>
</body>
</html>
```
FILE: styles.css
```css
* { box-sizing: border-box; }
html, body { margin: 0; padding: 0; }
body { width: 1920px; height: 1080px; overflow: hidden; background: #000; font: 13px/16px "DejaVu Sans", sans-serif; color: #111; }
.defs { position: absolute; }
ul { list-style: none; margin: 0; padding: 0; }
i, em { font-style: normal; display: block; flex: none; }
svg { flex: none; display: block; }
u { text-underline-offset: 2px; text-decoration-thickness: 1px; }

/* small arrows */
.tri { width: 0; height: 0; border: 4px solid transparent; border-width: 4px 3.5px; }
.tri.down { border-width: 4px 4px 0; border-top-color: #555; }
.tri.up { border-width: 0 4px 4px; border-bottom-color: #555; }
.tri.light { border-width: 5px 5px 0; border-top-color: #c8c8c8; }

/* desktop panel */
.topbar { height: 27px; display: flex; align-items: center; background: #000; color: #c8c8c8; font: 600 14px/25px "Noto Sans", sans-serif; position: relative; padding: 0 0 1px 12px; letter-spacing: -.4px; }
.activities { width: 97px; letter-spacing: 0; }
.qlogo { width: 18px; height: 18px; margin-right: 4px; }
.appname { margin-right: 6px; }
.clock { position: absolute; left: 890px; top: 0; width: 140px; text-align: center; white-space: nowrap; letter-spacing: -.35px; }
.tray { position: absolute; left: 1432px; top: 0; height: 26px; display: grid; align-items: center; justify-items: start; grid-template-columns: 50px 54px 18px 40px 18px 38px 20px 60px 29px 29px 29px 29px 14px 36px 12px; letter-spacing: 0; font-weight: 500; }
.tray .pct { font-size: 13px; letter-spacing: -.2px; }
.zoomapp { width: 16px; height: 16px; border-radius: 5px; background: #4a8cff; display: flex; align-items: center; justify-content: center; }

.desktop { height: 1053px; background: linear-gradient(#3d3d3d, #333 12px, #303030); border-radius: 8px 8px 0 0; padding: 8px 9px 7px 7px; }
.window { height: 1038px; background: #efefef; border-radius: 7px 7px 0 0; display: flex; flex-direction: column; box-shadow: 0 0 0 1px #1d1d1d, 0 2px 6px #0008; }
.titlebar { height: 38px; background: #353535; border-radius: 7px 7px 0 0; border-top: 1px solid #474747; border-bottom: 1px solid #1b1b1b; color: #f4f4f4; font: 600 13.6px/36px "Noto Sans", sans-serif; letter-spacing: -.52px; text-align: center; position: relative; }
.winbtns { position: absolute; right: 9px; top: 0; height: 36px; display: flex; align-items: center; }
.wmin { width: 8px; height: 2px; background: #fff; margin: 6px 26px 0 0; }
.wmax { width: 8px; height: 8px; margin-right: 21px; background: linear-gradient(#fff, #fff) center/8px 2px no-repeat, linear-gradient(#fff, #fff) center/2px 8px no-repeat; }
.wclose { width: 18px; height: 18px; border-radius: 50%; background: #f28b2c; display: flex; align-items: center; justify-content: center; }
.menubar { height: 22px; border-bottom: 1px solid #d4d4d4; display: flex; padding: 3px 0 0 10px; gap: 15.1px; flex: none; }

.toolbar { height: 39px; display: flex; align-items: center; background: linear-gradient(#fafafa, #ededed); border-bottom: 1px solid #b6b6b6; flex: none; }
.toolbar.slim { height: 16px; }
.grip { width: 16px; height: 18px; background: radial-gradient(circle, #aaa 35%, transparent 50%) 0 0/3px 3px repeat; background-clip: content-box; padding: 0 5px; }
.grip.first { width: 12.500px; padding: 0 3px 0 5px; }
.slim .grip { height: 15px; }
.toolbar b { width: 33px; height: 32px; flex: none; display: flex; align-items: center; justify-content: center; }
.toolbar b svg { width: 24px; height: 24px; }
.on { background: #dadada; border: 1px solid #a5a5a5; border-radius: 3px; }
b.off svg { opacity: .36; filter: saturate(.6); }
b.mono svg { filter: grayscale(1); }
.brown { color: #a55a30; } .grey { color: #777; } .khaki { color: #a8a890; }
.toolbar em, .docktools em { width: 12px; height: 4px; background: #555; clip-path: polygon(2px 0, 10px 0, 6px 4px); margin-top: 1px; }
em.off { opacity: .35; }
.vline { width: 7px; height: 22px; background: linear-gradient(#ccc, #ccc) 3px 0/1px 100% no-repeat; }

.work { height: 852px; display: flex; margin-top: 1px; flex: none; }
.leftdock { width: 385px; display: flex; flex-direction: column; margin-right: 6px; }
.docktitle { height: 21px; padding: 2px 2px 0 5px; display: flex; justify-content: space-between; flex: none; }
.dockbtns { display: flex; gap: 3px; padding-top: 2px; }
.dockbtns svg { width: 11px; height: 11px; }
.docktools { display: flex; align-items: center; flex: none; }
.docktools b { width: 25px; height: 24px; display: flex; align-items: center; justify-content: center; }
.docktools svg { width: 16px; height: 16px; }
.btools { height: 29px; padding: 0 0 3px 3px; }
.treebox { height: 416px; border: 1px solid #b3b3b3; background: #fff; display: flex; overflow: hidden; flex: none; }
.tree { flex: 1; min-width: 0; overflow: hidden; }
.tree li { height: 19px; display: flex; align-items: center; white-space: nowrap; overflow: hidden; }
.tree svg { width: 16px; height: 16px; margin-right: 6.500px; }
.ar { width: 23px; height: 8px; }
.ar.d { clip-path: polygon(6px 1px, 14px 1px, 10px 6px); background: #555; }
.ar.r { clip-path: polygon(8px 0, 12px 4px, 8px 8px); background: #555; }
.l1 { padding-left: 20px; } .l2 { padding-left: 40px; } .l3 { padding-left: 60px; } .l4 { padding-left: 80px; }
.sel { background: #308cc6; color: #fff; }
.sbar { width: 14px; border-left: 1px solid #b3b3b3; background: #fff; display: flex; flex-direction: column; flex: none; }
.sbtn { height: 13px; display: flex; align-items: center; justify-content: center; background: linear-gradient(90deg, #f2f2f2, #fff); }
.shandle { flex: 1; border: solid #b9b9b9; border-width: 1px 0; background: linear-gradient(90deg, #f2f2f2, #fff); }
.sgroove { background: #e3e3e3; flex: 1; border-bottom: 1px solid #b9b9b9; }
.splitter { height: 7px; display: flex; justify-content: center; align-items: flex-start; padding-top: 2px; flex: none; }
.splitter i { width: 17px; height: 1px; background: repeating-linear-gradient(90deg, #aaa 0 1px, transparent 1px 3px); }
.docktitle.lay { height: 21px; padding-top: 1px; }
.ltools { height: 28px; padding: 0 0 5px 4px; }
.ltools b.on { width: 24px; height: 23px; margin-right: 1px; }
.layers { flex: 1; background: #fff; border: 1px solid #b3b3b3; }
.layers li { height: 19px; display: flex; align-items: center; }
.layers li .ic { width: 16px; height: 16px; margin: 0 6.500px 0 6px; }
.nm { font-weight: bold; font-style: italic; color: #808080; white-space: nowrap; }
.nm.act { color: #fff; font-style: normal; text-decoration: underline; text-underline-offset: 2px; }
.sw { border: 1px solid #777; background: #fff; }
.sw.red { background: #c43a39; border-color: #4d2020; }
.sel .ar.r { background: #164868; }
.cb { width: 14px; height: 14px; border: 1px solid #b3b3b3; background: #fff; flex: none; display: block; }
.cb svg { width: 12px; height: 12px; }

.mapframe { width: 1008px; border: 1px solid #b3b3b3; background: #fff; flex: none; }
.mapframe canvas { display: block; }
.vsplit { width: 10px; display: flex; align-items: center; justify-content: center; }
.vsplit i { width: 1px; height: 17px; background: repeating-linear-gradient(#aaa 0 1px, transparent 1px 3px); }

.rightdock { width: 492px; margin-right: 3px; flex: none; }
.docktitle.rt { padding: 2px 0 0 1px; height: 22px; }
.combo, .btn { height: 25px; border: 1px solid #aaa; border-radius: 3px; background: linear-gradient(#fdfdfd, #ececec); display: flex; align-items: center; padding: 0 7px 0 5px; white-space: nowrap; }
.combo .tri { margin-left: auto; }
.combo svg { width: 14px; height: 14px; margin: 0 4px 0 2px; }
.input { height: 25px; border: 1px solid #aaa; border-radius: 3px; background: #fff; padding: 4px 2px; }
.stylebody { display: flex; margin-top: 6px; }
.tabs { width: 38px; height: 796px; background: #5d5d5d; }
.tab { height: 32px; display: flex; align-items: center; justify-content: center; padding-right: 9px; }
.tab svg { width: 22px; height: 22px; }
.tab.cur { background: #efefef; padding-right: 2px; }
.stylemain { width: 454px; }
.scroll { height: 765px; display: flex; overflow: hidden; }
.form { width: 440px; padding: 9px 0 0 12px; flex: none; }
.renderer { width: 419px; }
.row { display: flex; align-items: center; }
.row label { flex: none; }
.band { margin: 9px 0 6px 3px; }
.band label { width: 62px; } .band .combo { width: 351px; }
.minmax { margin-left: 3px; }
.minmax label { width: 62px; } .minmax .input { width: 142px; } .minmax label.mx { width: 67px; padding-left: 6px; }
.sect { height: 38px; display: flex; align-items: center; padding: 0 0 6px 7px; }
.bigtri { width: 8px; height: 12px; clip-path: polygon(0 0, 100% 50%, 0 100%); background: #333; margin-right: 10px; }
.wide { margin-left: 6px; height: 25px; }
.wide label { width: 140px; } .wide .combo, .wide .input { width: 267px; }
.ramp { margin-top: 6px; height: 28px; }
.rampbox { width: 255px; height: 28px; border: 1px solid #aaa; border-radius: 3px; background: linear-gradient(#fdfdfd, #f0f0f0); padding: 5px 4px; }
.rampbox i { height: 16px; background: linear-gradient(90deg, #000004, #140e36 10%, #3b0f70 20%, #641a80 30%, #8c2981 40%, #b73779 50%, #de4968 60%, #f7705c 70%, #fe9f6d 80%, #fecf92 90%, #fcfdbf); }
.rampbtn { width: 12px; height: 28px; border: 1px solid #aaa; border-radius: 3px; display: flex; align-items: center; justify-content: center; background: linear-gradient(#fdfdfd, #ececec); }
.suffix { margin-top: 9px; } .suffix label { line-height: 15px; }
.table { width: 407px; height: 250px; margin: 10px 0 0 6px; border: 1px solid #b3b3b3; background: #fff; display: flex; overflow: hidden; }
.tbody { flex: 1; }
.thead { height: 21px; display: grid; grid-template-columns: 99px 59px 1fr; background: linear-gradient(#fdfdfd, #ececec); border-bottom: 1px solid #aaa; margin-bottom: 1px; }
.thead span { padding: 3px 0 0 2px; border-right: 1px solid #ccc; } .thead span:last-child { border: 0; }
.tr { height: 38px; display: grid; grid-template-columns: 111px 51px 1fr; align-items: center; }
.tr span:first-child { padding-left: 23px; }
.tr span:last-child { color: #a0a0a0; }
.tr i { width: 36px; height: 36px; border-radius: 6px; }
.c1 { background: #000004; } .c2 { background: #02020b; } .c3 { background: #040313; } .c4 { background: #07051b; } .c5 { background: #0e0a28; } .c6 { background: #150e36; }
.table .shandle { flex: none; height: 28px; }
.mode { margin: 6px 0 0 6px; height: 25px; }
.mode label { width: 42px; } .mode .combo { width: 118px; } .mode label.cls { width: 55px; margin-left: 139px; }
.spin { width: 53px; height: 23px; border: 1px solid #aaa; border-radius: 3px; background: #fff; display: flex; align-items: center; flex: none; }
.spin span { flex: 1; padding-left: 4px; }
.spin.dis { background: #efefef; color: #bbb; }
.arrows { width: 14px; align-self: stretch; border-left: 1px solid #aaa; background: linear-gradient(#fdfdfd, #ececec); position: relative; }
.arrows::before, .arrows::after { content: ""; position: absolute; left: 3px; width: 8px; height: 4px; background: #555; }
.arrows::before { top: calc(50% - 7px); clip-path: polygon(50% 0, 100% 100%, 0 100%); }
.arrows::after { bottom: calc(50% - 6px); clip-path: polygon(0 0, 100% 0, 50% 100%); }
.dis .arrows::before, .dis .arrows::after { background: #bbb; }
.btns { margin: 7px 0 0 6px; gap: 6px; }
.btn { justify-content: center; padding: 0; width: 28px; height: 24px; margin-top: 1px; }
.btn svg { width: 16px; height: 16px; }
.classify { width: 80px; height: 25px; margin-top: 0; }
.clip { margin: 12px 0 0 6px; height: 14px; gap: 5px; }
.grouptitle { margin: 20px 0 0 3px; height: 18px; }
.group { width: 418px; margin-left: 1px; border: 1px solid #d3d3d3; border-radius: 3px 3px 0 0; background: #ebebeb; padding: 7px 0 0 10px; }
.grow { height: 31px; display: flex; align-items: center; }
.grow label { width: 165px; } .grow .combo { width: 230px; }
.slider { width: 164px; height: 15px; margin-right: 8px; position: relative; background: linear-gradient(#ddd, #ddd) 0 5px/100% 5px no-repeat; }
.slider::before { content: ""; position: absolute; inset: 5px 0 auto 0; height: 5px; border: 1px solid #b0b0b0; border-radius: 2px; }
.slider i { position: absolute; left: 0; top: 5px; width: 80px; height: 5px; background: #45a6e3; border: 1px solid #246b9b; border-radius: 2px; }
.slider b { position: absolute; left: 76px; top: 1px; width: 13px; height: 13px; border: 1px solid #aaa; border-radius: 3px; background: #fff; }
.grow .spin { width: 58px; }
.sbar.big { height: 765px; }
.big .shandle { flex: none; height: 548px; }
.applyrow { height: 31px; padding: 6px 0 0 3px; display: flex; align-items: center; }
.btn.sm { width: 24px; height: 24px; margin: 0 6px 0 0; }
.orange { color: #e5813b; } .green { color: #7db887; }
.applyrow .cb { margin: 0 5px 0 203px; }
.live { width: 89px; }
.btn.apply { width: 80px; height: 25px; margin: 0; }

.status { flex: 1; display: flex; align-items: center; font-size: 11px; padding: 0 0 0 4px; color: #222; }
.locator { width: 270px; height: 25px; border: 1px solid #aaa; border-radius: 3px; background: #fff; display: flex; align-items: center; padding-left: 8px; color: #808080; font-size: 13px; margin-right: 712px; flex: none; }
.locator svg { width: 13px; height: 13px; margin-right: 7px; }
.status .spin { height: 24px; }
.status > label { white-space: nowrap; flex: none; }
.status .input { height: 23px; padding: 3px 0; text-align: center; }
.coord { width: 118px; flex: none; }
.status > label:nth-of-type(1) { width: 64px; }
.mouse { width: 16px; height: 16px; margin: 0 12px 0 4px; }
.status > label:nth-of-type(2) { width: 34px; }
.status .scale { width: 96px; }
.drop { width: 19px; align-self: stretch; border-left: 1px solid #aaa; display: flex; align-items: center; justify-content: center; background: linear-gradient(#fdfdfd, #ececec); }
.lock { width: 13px; height: 15px; margin: 0 8px 0 12px; }
.status > label:nth-of-type(3) { width: 56px; }
.status .magn { width: 98px; }
.status > .rotl { width: 56px; margin-left: 9px; }
.status .rot { width: 94px; margin-right: 6px; }
.status > .render { width: 55px; margin-left: 5px; }
.crs { width: 15px; height: 15px; margin: 0 2px 0 1px; }
.status > .epsg { width: 61px; }
.bubble { width: 17px; height: 17px; margin-left: 23px; }

/* floating menus */
.ctx { position: absolute; background: #fff; box-shadow: inset 0 0 0 1px #919191, 1px 1px 2px #0004; }
.ctx.main { left: 354px; top: 369px; width: 322px; height: 360px; }
.ctx.submenu { left: 676px; top: 652px; width: 265px; height: 75px; }
.ctx li { height: 25px; display: flex; align-items: center; padding-left: 28px; position: relative; white-space: pre; }
.submenu li { padding-left: 27px; }
.ctx svg { position: absolute; left: 7px; width: 16px; height: 16px; }
.ctx li.sep { height: 2px; margin: 0 5px; padding: 0; background: linear-gradient(#b8b8b8, #b8b8b8) 0 0/100% 1px no-repeat; }
.ctx li.hl { background: #308cc6; color: #fff; box-shadow: inset 0 0 0 1px #2471a3; }
.sub { position: absolute; right: 6px; width: 4px; height: 8px; clip-path: polygon(0 0, 100% 50%, 0 100%); background: #555; }
.hl .sub { background: #b9dbf2; }
.pointer { position: absolute; left: 908px; top: 689px; width: 14px; height: 20px; }
```
FILE: map.js
```js
// Draws the elevation raster of the map canvas with the magma colour ramp.
(function () {
  var cv = document.getElementById('map'), W = cv.width, H = cv.height;
  var OX = 400, OY = 191;
  // two map sheets, each with its own origin and scale
  var west = { x: 420, y: 330, sx: 2.8, sy: 2.75 };
  var east = { x: 880, y: 440, sx: 2.958, sy: 3 };
  function P(s, str) {
    return str.split(' ').map(function (p) {
      p = p.split(',');
      return [s.x + p[0] / s.sx - OX, s.y + p[1] / s.sy - OY];
    });
  }
  var north = P(west, '768,95 775,65 795,50 830,42 880,38 930,36 945,52 960,72 978,90 985,112 1010,128 1045,145 1085,155 1120,160 1150,163 1165,190 1180,210 1205,240 1215,270 1230,300 1250,330 1248,355 1262,385 1283,410 1288,440 1300,470 1318,480 1325,520 1332,560 1340,595 1385,597 1420,610 1445,632 1450,655 1490,672 1520,680');
  var eastCoast = P(east, '265,425 272,460 283,490 272,520 285,545 305,555 322,575 320,605 285,600 250,582 205,578 165,600 145,615 135,640 60,720 60,800 105,860 110,885 130,905 165,910 160,930 178,950 175,975 155,1000 150,1030 130,1030 100,1025 70,1040 85,1055 115,1080 110,1095 85,1100 100,1125 140,1145 190,1162 235,1160 260,1140 265,1110 290,1090 320,1060 340,1035 335,1005 343,968 390,970 405,950 408,935 425,920 410,910 415,885 460,872 500,870 548,880 552,925 565,935 610,935 645,942');
  var cutSE = P(east, '645,942 620,975 595,1020 580,1060 572,1110 560,1155 540,1182 500,1187 455,1178 410,1178 350,1200 280,1235 220,1265 180,1295 175,1315 150,1325 128,1347 110,1310 85,1308 60,1305 45,1270 30,1235 0,1232');
  var cutS = P(west, '1310,1430 1250,1420 1180,1422 1120,1430 1100,1435 1082,1458 1040,1452 1018,1465 1000,1445 940,1440 890,1438 858,1412 830,1425 770,1435 700,1458 620,1492');
  var sw = P(west, '605,1505 588,1529 560,1508 535,1490 525,1455 510,1430 460,1415 435,1390 400,1380 375,1370 350,1385 338,1404 320,1388 280,1390 272,1415 240,1432 190,1465 160,1465 138,1484 115,1455 100,1430 80,1395 90,1375 80,1345 55,1330 20,1345 18,1330 45,1322 62,1290 58,1240 42,1195 55,1130 45,1100 100,1000 400,700 600,480 716,442');
  var bay = P(west, '716,442 760,440 780,435 800,415 835,395 878,388 890,345 900,305 890,260 875,230 855,205 820,185 800,170 778,140 768,95 775,65 795,50 830,42 880,38');
  var lands = [north.concat(eastCoast, cutSE, cutS, sw, bay)].concat([
    '113,63 127,65 137,80 165,77 187,86 200,102 235,99 265,116 292,128 302,158 312,178 335,176 350,168 380,180 367,195 352,200 347,225 330,257 300,234 265,220 235,197 203,162 168,137 143,112 128,87',
    '343,240 370,226 395,226 442,238 457,260 480,248 510,268 542,266 547,288 577,298 614,310 602,342 582,372 542,377 532,407 507,427 492,447 477,460 487,485 512,518 552,558 552,582 530,574 500,597 470,602 445,620 428,592 438,562 428,532 403,512 373,490 368,460 373,410 380,350 408,345 388,315 343,282',
    '303,478 330,488 367,498 372,528 397,553 422,573 430,607 400,620 345,614 318,592 316,550 300,522',
    '550,420 580,430 620,427 665,417 702,428 722,448 750,453 777,478 782,503 800,508 813,470 818,433 850,427 882,443 902,470 909,508 940,513 943,485 968,478 932,458 980,453 1005,468 1030,483 1080,478 1124,513 1070,520 1030,532 1017,572 987,602 940,632 890,642 840,627 798,607 798,582 750,597 688,597 658,572 618,542 578,507 565,470 600,467 590,442 558,437',
    '745,447 753,425 770,418 762,442', '696,368 710,366 734,390 705,407',
    '618,330 640,316 664,330 657,350 670,374 608,370 610,350 633,345', '557,285 576,287 574,295 559,294',
    '546,396 557,402 550,413', '1013,558 1044,568 1036,584 1010,575', '976,616 994,622 989,634 979,629', '1003,591 1015,595 1006,603',
    '348,438 364,442 361,452', '343,462 370,466 365,475 344,472', '300,471 327,476 321,487 301,484',
    '1000,673 1050,656 1100,643 1150,628 1203,611 1203,589 1240,586 1257,603 1290,600 1340,618 1390,638 1422,656 1447,660 1472,690 1477,725 1488,755 1460,789 1430,777 1380,777 1320,752 1270,732 1215,740 1150,734 1110,714 1070,692'
  ].map(function (s) { return P(east, s); }));

  function layer() { var c = document.createElement('canvas'); c.width = W; c.height = H; return c.getContext('2d', { willReadFrequently: true }); }
  function trace(c, p) { c.beginPath(); p.forEach(function (q) { c.lineTo(q[0], q[1]); }); }
  var mask = layer(); mask.fillStyle = '#fff';
  lands.forEach(function (p) { trace(mask, p); mask.closePath(); mask.fill(); });

  // shore falloff: provincial borders are extended so that only real coasts darken
  var shore = layer(), solid = layer();
  solid.drawImage(mask.canvas, 0, 0);
  solid.strokeStyle = '#fff'; solid.lineWidth = 34; solid.lineJoin = 'round';
  [cutSE.slice(0, 14), cutS.slice(10), bay].forEach(function (p) { trace(solid, p); solid.stroke(); });
  shore.filter = 'blur(4.5px)'; shore.drawImage(solid.canvas, 0, 0);

  // elevation, 170 = top of the ramp, above it the ramp is saturated
  var el = layer();
  function grey(t) { var g = Math.round(Math.min(1.5, t) * 170); return 'rgb(' + g + ',' + g + ',' + g + ')'; }
  el.fillStyle = grey(.27); el.fillRect(0, 0, W, H);
  function area(s, t, b, str) { el.filter = 'blur(' + b + 'px)'; el.fillStyle = grey(t); trace(el, P(s, str)); el.closePath(); el.fill(); }
  function ridge(s, t, b, w, str) { el.filter = 'blur(' + b + 'px)'; el.strokeStyle = grey(t); el.lineWidth = w; el.lineCap = el.lineJoin = 'round'; trace(el, P(s, str)); el.stroke(); }
  area(east, .12, 6, '90,40 800,100 1150,420 1150,660 650,660 560,580 540,420 290,420');
  // interior plateaus
  area(west, .46, 16, '700,440 900,440 1100,480 1080,560 950,720 760,640 700,640');
  area(west, .14, 12, '700,670 820,650 900,720 980,780 980,900 700,900');
  area(west, .28, 14, '880,760 980,740 1050,900 900,900');
  area(west, .47, 22, '420,1090 700,1080 1000,1080 1060,1200 1000,1290 860,1260 640,1250 500,1180');
  area(west, .54, 14, '590,1290 700,1270 780,1330 760,1410 680,1450 610,1470 550,1370');
  area(west, .28, 16, '1060,1100 1300,1100 1260,1300 1200,1400 1000,1400 1040,1250');
  area(west, .4, 12, '940,1180 1040,1160 1070,1280 980,1310');
  area(west, .1, 12, '860,1320 1000,1340 1100,1400 1100,1460 880,1440');
  area(west, .1, 12, '1200,1200 1400,1230 1370,1360 1270,1370');
  ridge(west, .55, 5, 9, '1250,1180 1300,1160 1320,1130');
  ridge(west, .38, 6, 14, '1370,1160 1440,1180');
  area(west, .38, 14, '1330,1380 1480,1380 1560,1400 1500,1480 1410,1510 1340,1460');
  area(west, .95, 9, '790,1080 870,1080 860,1110 830,1125 800,1110');
  // river valleys
  ridge(west, .12, 2.5, 3, '400,1120 460,1170 540,1160 640,1170 690,1110');
  ridge(west, .14, 2.5, 3, '480,1210 560,1200 640,1210 690,1240');
  ridge(west, .1, 2.5, 3.5, '690,1160 720,1230 780,1280 790,1310 750,1350 690,1350 640,1320');
  ridge(west, .12, 2.5, 3, '750,1350 780,1390 810,1420');
  ridge(west, .08, 2.5, 3, '560,1440 610,1430 620,1400');
  ridge(west, .1, 2.5, 3.5, '1070,1150 1020,1210 970,1240 950,1290 910,1250 900,1190');
  ridge(west, .06, 2.5, 3, '950,1290 920,1330 880,1350 890,1390');
  // southwest ranges
  area(west, .08, 9, '20,1080 100,1080 80,1300 130,1400 250,1380 270,1440 130,1500 20,1400');
  area(west, .48, 10, '100,1120 230,1130 330,1260 390,1340 320,1370 250,1350 180,1390 110,1340 80,1230');
  area(west, .5, 12, '220,1080 400,1080 430,1180 490,1290 430,1270 330,1190');
  ridge(west, .04, 5, 9, '170,1110 290,1210 400,1285 490,1350 540,1440 590,1520');
  ridge(west, .03, 6, 30, '440,1370 510,1390 550,1460');
  ridge(west, 1.35, 4, 11, '270,1090 330,1140 380,1200');
  ridge(west, 1.05, 4, 8, '380,1200 440,1250');
  ridge(west, .75, 4, 5, '450,1270 490,1320');
  ridge(west, 1.2, 3.5, 7, '140,1190 220,1215 260,1280 330,1345');
  ridge(west, 1.2, 3.5, 7, '115,1250 155,1280 172,1320 150,1360');
  ridge(west, .7, 3.5, 5, '220,1150 215,1215');
  // north-eastern lowland
  area(west, .02, 8, '1000,95 1150,140 1230,240 1300,410 1340,540 1400,590 1570,680 1600,820 1450,830 1440,690 1330,620 1220,570 1090,560 1120,440 1140,320 1110,230 1060,180');
  ridge(west, .32, 10, 20, '1110,240 1120,300');
  // volcano cones
  (function () {
    var c = P(west, '1172,772')[0], g, i, R = 126, st = [[0, 1.5], [.3, 1.5], [.41, 1.02], [.5, .76], [.6, .52], [.74, .3], [1, .1]];
    el.filter = 'none';
    g = el.createRadialGradient(c[0], c[1], 0, c[0], c[1], R);
    for (i = 0; i < st.length; i++) { var v = Math.round(st[i][1] * 170); g.addColorStop(st[i][0], 'rgba(' + v + ',' + v + ',' + v + ',' + (st[i][0] === 1 ? 0 : st[i][0] > .7 ? .85 : 1) + ')'); }
    el.fillStyle = g; el.beginPath(); el.arc(c[0], c[1], R, 0, 7); el.fill();
  })();
  ridge(west, .9, 3, 7, '1260,640 1350,670');
  area(west, .55, 9, '740,440 850,400 1110,380 1120,440 1050,520 960,520 880,510 780,500');
  area(west, .6, 8, '770,540 850,490 960,500 1030,560 1010,660 950,720 860,690 800,640');
  area(west, 1.5, 5, '785,565 850,515 935,530 1005,580 990,655 930,690 875,670 855,620 795,605');
  area(west, .7, 8, '880,30 940,30 1000,120 1080,170 1070,260 1120,340 1130,400 1080,470 950,500 900,300 860,150');
  area(west, 1.5, 5, '750,30 850,30 870,80 900,130 950,160 1000,200 1035,270 1080,340 1083,410 1045,455 980,480 900,468 850,450 780,460 780,400 880,370 890,290 830,200 750,140');
  ridge(west, .3, 2.500, 3, '770,120 800,135 815,175 850,185');
  ridge(west, .4, 3, 4.5, '840,50 880,70 870,105 900,120');
  ridge(west, .4, 3, 4.5, '900,190 950,160 960,120 920,80');
  ridge(west, .18, 3, 4, '920,510 990,530 1040,580 1110,540');
  ridge(west, .62, 3, 6, '800,860 830,855'); ridge(west, .6, 3, 6, '860,830 890,865'); ridge(west, .4, 3, 5, '900,862 930,855');
  // islands and peninsula
  area(east, .48, 6, '145,530 200,510 250,545 300,580 260,600 180,580');
  ridge(east, .7, 3, 5, '150,545 210,555'); ridge(east, .5, 3, 5, '125,440 180,455');
  ridge(east, .24, 4, 12, '150,95 240,170 320,230');
  ridge(east, .28, 4, 12, '370,260 430,320 470,370'); ridge(east, .22, 4, 12, '480,300 590,330');
  ridge(east, .45, 5, 14, '400,370 430,420 470,490 520,550'); ridge(east, 1.25, 2.500, 4.5, '405,375 430,415 460,470');
  ridge(east, .65, 3, 6, '480,520 510,550'); ridge(east, .32, 4, 16, '460,570 490,580'); ridge(east, .28, 4, 14, '335,520 350,580 400,595');
  ridge(east, .45, 5, 14, '590,480 660,530 740,575'); ridge(east, 1, 2.500, 3.5, '590,478 660,525'); ridge(east, .9, 2.500, 3.5, '700,560 740,570');
  ridge(east, .42, 4, 8, '620,450 690,450'); ridge(east, .5, 4, 14, '835,510 860,470'); ridge(east, .9, 3, 5, '845,495 856,480');
  ridge(east, .48, 6, 28, '840,590 910,570'); ridge(east, 1.15, 3, 7, '870,590 885,560'); ridge(east, .36, 4, 8, '960,580 1000,550');
  ridge(east, .42, 3, 5, '1000,480 1100,495');
  area(east, .5, 6, '1040,670 1200,625 1240,600 1400,650 1480,750 1440,780 1250,720 1120,710');
  ridge(east, .95, 3, 5, '1120,680 1180,690 1225,645'); ridge(east, .95, 3, 5, '1270,630 1350,660');
  ridge(east, 1.5, 4, 13, '1240,683 1330,690 1390,738'); ridge(east, .8, 4, 9, '1390,738 1450,760');
  ridge(east, .12, 2.500, 2.500, '1250,610 1225,655'); ridge(east, .15, 2, 2, '1380,690 1475,730');
  area(east, .27, 8, '330,950 560,860 650,930 600,1040 560,1010 400,1010 300,1100 200,1170 230,1260 160,1300');
  area(east, .68, 7, '390,1005 570,1005 585,1060 560,1190 250,1250 230,1210 310,1130 350,1060');
  area(east, 1.5, 5, '385,1060 420,1030 440,1075 480,1030 545,1030 560,1100 590,1200 400,1210 270,1265 275,1205 350,1130 330,1100');
  ridge(east, .3, 2.500, 4, '430,960 432,1100 460,1115'); ridge(east, .4, 2.500, 3, '310,1120 385,1125');
  ridge(east, .3, 2.500, 3, '540,980 565,1070 560,1110'); ridge(east, .4, 2.500, 3, '495,990 495,1050'); ridge(east, .6, 3, 7, '550,1110 550,1160');

  // value noise
  function hash(x, y) { var n = (x * 374761393 + y * 668265263) | 0; n = Math.imul(n ^ (n >>> 13), 1274126177); return ((n ^ (n >>> 16)) >>> 0) / 4294967296; }
  function noise(x, y) {
    var ix = Math.floor(x), iy = Math.floor(y), fx = x - ix, fy = y - iy;
    fx = fx * fx * (3 - 2 * fx); fy = fy * fy * (3 - 2 * fy);
    var a = hash(ix, iy), b = hash(ix + 1, iy), c = hash(ix, iy + 1), d = hash(ix + 1, iy + 1);
    return a + (b - a) * fx + (c - a) * fy + (a - b - c + d) * fx * fy;
  }
  // inverted ridges read as narrow, dark drainage lines
  function gully(x, y) { return Math.min(1, Math.abs(2 * noise(x, y) - 1) * 1.8); }
  var ramp = [[0, 0, 4], [20, 14, 54], [59, 15, 112], [100, 26, 128], [140, 41, 129], [183, 55, 121], [222, 73, 104], [247, 112, 92], [254, 159, 109], [254, 207, 146], [252, 253, 191]];
  var M = mask.getImageData(0, 0, W, H).data, S = shore.getImageData(0, 0, W, H).data, E = el.getImageData(0, 0, W, H).data;
  var ctx = cv.getContext('2d'), out = ctx.createImageData(W, H), D = out.data;
  for (var y = 0; y < H; y++) for (var x = 0; x < W; x++) {
    var k = (y * W + x) * 4, near = S[k + 3];
    if (near < 6) continue;
    // fine jitter of the shoreline
    var jx = Math.round((noise(x / 3, y / 3) - .5) * 5), jy = Math.round((noise(x / 3 + 90, y / 3) - .5) * 5);
    var cut = (y > 660 && x > 190 && x < 450) || (x < 245 && y < 250 && x > 160) || (x > 450 && y > 640);
    if (cut) { jx = jy = 0; }
    var mk = ((y + jy) * W + x + jx) * 4 + 3;
    if (!(M[mk] > 127)) continue;
    // warp along gullies
    var n1 = noise(x / 12, y / 12), n2 = noise(x / 12 + 50, y / 12 + 7), n3 = noise(x / 4, y / 4), n4 = noise(x / 4 + 31, y / 4 + 3);
    var wx = (n1 - .5) * 13 + (n3 - .5) * 9, wy = (n2 - .5) * 13 + (n4 - .5) * 9;
    var ex = Math.max(0, Math.min(W - 1, Math.round(x + wx))), ey = Math.max(0, Math.min(H - 1, Math.round(y + wy)));
    // the great cone keeps a smooth outline
    var cx = x - 438.6, cy = y - 419.700, cone = Math.max(0, Math.min(1, (125 - Math.sqrt(cx * cx + cy * cy)) / 35));
    ex = Math.round(ex + (x - ex) * cone * .8); ey = Math.round(ey + (y - ey) * cone * .8);
    var h = E[(ey * W + ex) * 4] / 170;
    var r = gully(x / 17 + n1, y / 17 + n2) * .4 + gully(x / 8 + n2, y / 8 + n1) * .32 + gully(x / 4, y / 4) * .16 + noise(x / 1.600, y / 1.600) * .12;
    h += (r - .66) * (.08 + Math.min(h, 1) * .52) * (h > 1.2 ? .6 : 1) * (1 - cone * .85);
    var s = (near / 255 - .5) / .42; s = s < 0 ? 0 : s > 1 ? 1 : s;
    h *= .1 + .9 * s;
    h = h < 0 ? 0 : h > .9999 ? .9999 : h;
    var q = h * 10, i = Math.floor(q), f = q - i, a = ramp[i], b = ramp[i + 1];
    D[k] = a[0] + (b[0] - a[0]) * f; D[k + 1] = a[1] + (b[1] - a[1]) * f; D[k + 2] = a[2] + (b[2] - a[2]) * f; D[k + 3] = 255;
  }
  ctx.putImageData(out, 0, 0);
})();
```
